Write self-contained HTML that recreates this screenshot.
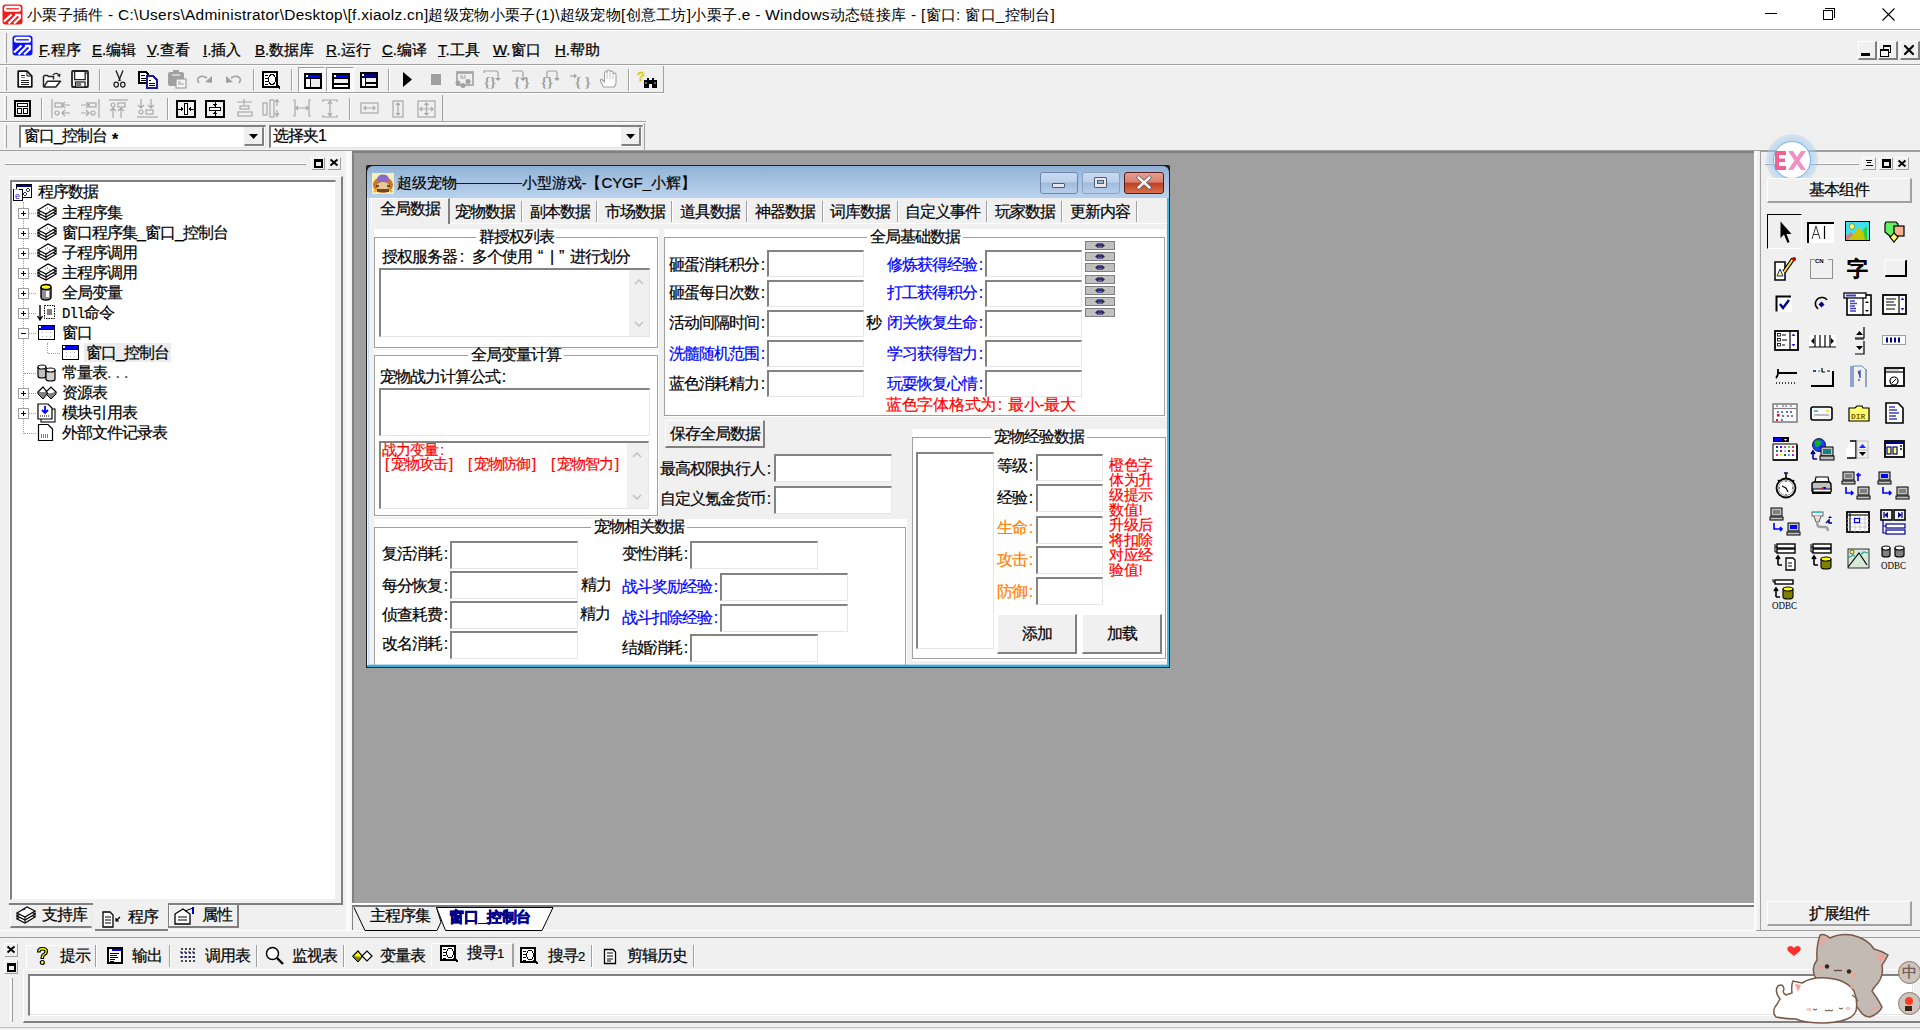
<!DOCTYPE html>
<html><head><meta charset="utf-8">
<style>
*{box-sizing:border-box;margin:0;padding:0}
html,body{width:1920px;height:1030px;overflow:hidden;background:#f0f0f0;font-family:"Liberation Sans",sans-serif;font-size:15px;color:#000}
.a{position:absolute}
.t{position:absolute;white-space:nowrap;line-height:18px;font-size:16px;letter-spacing:-1px;-webkit-text-stroke:0.2px}
.c{display:inline-block;width:8px;text-align:center;letter-spacing:0}
.sunk{border-top:2px solid #a0a0a0;border-left:2px solid #a0a0a0;border-right:1px solid #fff;border-bottom:1px solid #fff}
.edit{position:absolute;background:#fff;border-top:2px solid #838383;border-left:2px solid #838383;border-right:1px solid #e6e6e6;border-bottom:1px solid #e6e6e6}
.btn{position:absolute;background:#f0f0f0;border-top:1px solid #fff;border-left:1px solid #fff;border-right:2px solid #a0a0a0;border-bottom:2px solid #a0a0a0;text-align:center}
.hl{position:absolute;height:1px;background:#a0a0a0}
.vl{position:absolute;width:1px;background:#a0a0a0}
.grip{position:absolute;width:3px;border-left:1px solid #fff;border-right:1px solid #a0a0a0}
.tbsep{position:absolute;width:2px;border-left:1px solid #a0a0a0;border-right:1px solid #fff}
svg{position:absolute;overflow:visible}
.blue{color:#0000ff}
.red{color:#ff0000}
.org{color:#ff8000}
</style></head><body>

<!-- TITLE BAR -->
<div class="a" style="left:0;top:0;width:1920px;height:29px;background:#fff"></div>
<div class="hl" style="left:0;top:29px;width:1920px;background:#a9a9a9"></div>
<svg style="left:2px;top:4px" width="21" height="21" viewBox="0 0 21 21"><rect x="0.5" y="0.5" width="20" height="20" rx="3" fill="#f41a1a"/><rect x="2" y="1.8" width="17" height="6" rx="2.5" fill="#fff"/><rect x="4.2" y="4.2" width="12.6" height="1.3" fill="#f41a1a"/><path d="M2 17.5L9.5 10.5M6.5 19.5L14 12M12 19.5L17.8 14V11H13" stroke="#fff" stroke-width="2.3" fill="none" stroke-linejoin="round"/></svg>
<div class="t" style="left:27px;top:6px;font-size:15.45px;letter-spacing:0.29px;-webkit-text-stroke:0">小栗子插件 - C:\Users\Administrator\Desktop\[f.xiaolz.cn]超级宠物小栗子(1)\超级宠物[创意工坊]小栗子.e - Windows动态链接库 - [窗口: 窗口_控制台]</div>
<div class="hl" style="left:1765px;top:13px;width:12px;background:#000"></div>
<div class="a" style="left:1823px;top:10px;width:10px;height:10px;border:1px solid #000"></div>
<div class="a" style="left:1825px;top:8px;width:10px;height:10px;border-top:1px solid #000;border-right:1px solid #000"></div>
<svg style="left:1882px;top:8px" width="13" height="13" viewBox="0 0 13 13"><path d="M0.5 0.5L12.5 12.5M12.5 0.5L0.5 12.5" stroke="#000" stroke-width="1.1"/></svg>
<!-- MENU BAR -->
<div class="hl" style="left:0;top:30px;width:1920px;background:#fff"></div>
<div class="hl" style="left:0;top:64px;width:1920px;background:#a0a0a0"></div>
<div class="hl" style="left:0;top:65px;width:1920px;background:#fff"></div>
<div class="grip" style="left:4px;top:33px;height:30px"></div>
<svg style="left:12px;top:35px" width="21" height="21" viewBox="0 0 21 21"><rect x="0.5" y="0.5" width="20" height="20" rx="3" fill="#0a10f8"/><rect x="2" y="1.8" width="17" height="6" rx="2.5" fill="#fff"/><rect x="4.2" y="4.2" width="12.6" height="1.3" fill="#0a10f8"/><path d="M2 17.5L9.5 10.5M6.5 19.5L14 12M12 19.5L17.8 14V11H13" stroke="#fff" stroke-width="2.3" fill="none" stroke-linejoin="round"/></svg>
<div class="t" style="left:39px;top:41px;font-size:15px;letter-spacing:0;-webkit-text-stroke:0.25px;"><u>F</u>.程序</div>
<div class="t" style="left:92px;top:41px;font-size:15px;letter-spacing:0;-webkit-text-stroke:0.25px;"><u>E</u>.编辑</div>
<div class="t" style="left:147px;top:41px;font-size:15px;letter-spacing:0;-webkit-text-stroke:0.25px;"><u>V</u>.查看</div>
<div class="t" style="left:203px;top:41px;font-size:15px;letter-spacing:0;-webkit-text-stroke:0.25px;"><u>I</u>.插入</div>
<div class="t" style="left:255px;top:41px;font-size:15px;letter-spacing:0;-webkit-text-stroke:0.25px;"><u>B</u>.数据库</div>
<div class="t" style="left:326px;top:41px;font-size:15px;letter-spacing:0;-webkit-text-stroke:0.25px;"><u>R</u>.运行</div>
<div class="t" style="left:382px;top:41px;font-size:15px;letter-spacing:0;-webkit-text-stroke:0.25px;"><u>C</u>.编译</div>
<div class="t" style="left:438px;top:41px;font-size:15px;letter-spacing:0;-webkit-text-stroke:0.25px;"><u>T</u>.工具</div>
<div class="t" style="left:493px;top:41px;font-size:15px;letter-spacing:0;-webkit-text-stroke:0.25px;"><u>W</u>.窗口</div>
<div class="t" style="left:555px;top:41px;font-size:15px;letter-spacing:0;-webkit-text-stroke:0.25px;"><u>H</u>.帮助</div>
<!-- MDI child buttons -->
<div class="a" style="left:1858px;top:41px;width:19px;height:19px;border-top:1px solid #fff;border-left:1px solid #fff;border-right:2px solid #808080;border-bottom:2px solid #808080"></div>
<div class="a" style="left:1861px;top:53px;width:9px;height:3px;background:#000"></div>
<div class="a" style="left:1878px;top:41px;width:20px;height:19px;border-top:1px solid #fff;border-left:1px solid #fff;border-right:2px solid #808080;border-bottom:2px solid #808080"></div>
<div class="a" style="left:1883px;top:45px;width:8px;height:8px;border:1px solid #000;border-top-width:2px"></div>
<div class="a" style="left:1880px;top:49px;width:9px;height:8px;border:1px solid #000;border-top-width:2px;background:#fff"></div>
<div class="a" style="left:1900px;top:41px;width:20px;height:19px;border-top:1px solid #fff;border-left:1px solid #fff;border-right:2px solid #808080;border-bottom:2px solid #808080"></div>
<svg style="left:1904px;top:45px" width="10" height="10" viewBox="0 0 10 10"><path d="M1 1L9 9M9 1L1 9" stroke="#000" stroke-width="2.2" stroke-linecap="round"/></svg>
<!-- TOOLBAR 1 -->
<div class="hl" style="left:0;top:92px;width:664px;background:#a0a0a0"></div>
<div class="hl" style="left:0;top:93px;width:664px;background:#fff"></div>
<div class="vl" style="left:663px;top:66px;height:27px;background:#a0a0a0"></div>
<div class="grip" style="left:4px;top:67px;height:24px"></div>
<svg style="left:17px;top:70px" width="16" height="18" viewBox="0 0 16 18"><path d="M1.2 1.2H10L14.8 6V16.8H1.2Z" fill="#fff" stroke="#111" stroke-width="1.7" stroke-linejoin="round"/><path d="M10 1.2V6H14.8" fill="none" stroke="#111" stroke-width="1"/><path d="M4 5.5h4M4 10.5h8M4 12.5h8M4 14.5h8" stroke="#222" stroke-width="1"/><path d="M4 7.5h4" stroke="#808080"/></svg>
<svg style="left:42px;top:71px" width="20" height="17" viewBox="0 0 20 17"><path d="M1.5 16V5.5L2.5 4.5H5.5L6.5 5.5H11.5V8.5" fill="#fff" stroke="#222" stroke-width="1.5"/><path d="M1.8 16L5.5 10.2H18.5L13.8 16Z" fill="#fff" stroke="#222" stroke-width="1.5" stroke-linejoin="round"/><path d="M11 4Q14 1 16.5 3.5" fill="none" stroke="#222" stroke-width="1.2"/><path d="M15 4.2L18.6 2.6L18 6.6Z" fill="#222"/></svg>
<svg style="left:71px;top:70px" width="18" height="18" viewBox="0 0 18 18"><rect x="1" y="1" width="16" height="16" rx="1" fill="#fff" stroke="#222" stroke-width="1.8"/><path d="M3.6 1.5V9.6H14.2V1.5" fill="none" stroke="#222" stroke-width="1.3"/><rect x="4.5" y="12" width="9.5" height="5" fill="#fff" stroke="#222" stroke-width="1.3"/><rect x="5.3" y="12.7" width="5" height="3.8" fill="#777"/><path d="M15.3 2.5v1.5" stroke="#222"/></svg>
<div class="tbsep" style="left:99px;top:69px;height:22px"></div>
<svg style="left:113px;top:70px" width="13" height="18" viewBox="0 0 13 18"><path d="M3 0.5L7.3 11M10 0.5L5.7 11" stroke="#222" stroke-width="1.4"/><ellipse cx="3.2" cy="14.6" rx="2.2" ry="2.5" fill="none" stroke="#222" stroke-width="1.3"/><ellipse cx="9.8" cy="14.6" rx="2.2" ry="2.5" fill="none" stroke="#222" stroke-width="1.3"/></svg>
<svg style="left:138px;top:71px" width="20" height="17" viewBox="0 0 20 17" shape-rendering="crispEdges"><path d="M1 1H8L10 3V12H1Z" fill="#fff" stroke="#000" stroke-width="1.5"/><path d="M3 4h4M3 7h5M3 9h5" stroke="#000"/><path d="M9 5H15L19 9V17H9Z" fill="#fff" stroke="#1a1a9a" stroke-width="1.8"/><path d="M11 9h2M11 12h6M11 14h6" stroke="#000"/></svg>
<svg style="left:167px;top:70px" width="20" height="19" viewBox="0 0 20 19"><rect x="1" y="2" width="16" height="14" rx="2" fill="#a0a0a0"/><rect x="6" y="0" width="6" height="3" fill="#a0a0a0"/><path d="M5 5h8" stroke="#f0f0f0" stroke-width="1.2"/><rect x="9" y="9" width="10" height="9" fill="#f4f4f4" stroke="#a0a0a0" stroke-width="1.2"/><path d="M11 12h3M11 14h6" stroke="#a0a0a0"/></svg>
<svg style="left:196px;top:75px" width="18" height="10" viewBox="0 0 18 10"><path d="M3 8Q0 4 3.5 2Q7 0 11 3" fill="none" stroke="#a0a0a0" stroke-width="1.6"/><path d="M9 7L16 1L16 8Z" fill="#a0a0a0"/></svg>
<svg style="left:226px;top:75px" width="16" height="10" viewBox="0 0 16 10"><path d="M13 8Q16 4 12.5 2Q9 0 5 3" fill="none" stroke="#a0a0a0" stroke-width="1.6"/><path d="M7 7L0 1L0 8Z" fill="#a0a0a0"/></svg>
<div class="tbsep" style="left:253px;top:69px;height:22px"></div>
<svg style="left:262px;top:71px" width="21" height="18" viewBox="0 0 21 18" shape-rendering="crispEdges"><rect x="1" y="1" width="14" height="15" fill="#fff" stroke="#000" stroke-width="2"/><path d="M3 4h3M3 7h3M3 10h3M3 13h3" stroke="#000" stroke-width="1"/><ellipse cx="10" cy="8.5" rx="3.5" ry="5" fill="#fff" stroke="#000" stroke-width="1.2"/><path d="M14 14L18 17" stroke="#000" stroke-width="2.4"/></svg>
<div class="tbsep" style="left:291px;top:69px;height:22px"></div>
<div class="a" style="left:298px;top:67px;width:27px;height:25px;background:#f8f8f8;border-top:1px solid #a0a0a0;border-left:1px solid #a0a0a0;border-right:1px solid #fff;border-bottom:1px solid #fff"></div>
<div class="a" style="left:326px;top:67px;width:28px;height:25px;background:#f8f8f8;border-top:1px solid #a0a0a0;border-left:1px solid #a0a0a0;border-right:1px solid #fff;border-bottom:1px solid #fff"></div>
<svg style="left:304px;top:73px" width="18" height="16" viewBox="0 0 18 16" shape-rendering="crispEdges"><rect x="1" y="1" width="16" height="14" fill="#f0f0f0" stroke="#000" stroke-width="2"/><rect x="2" y="2" width="14" height="3" fill="#0000ff"/><rect x="2" y="2" width="2" height="2" fill="#fff"/><rect x="2" y="6" width="4" height="8" fill="#fff"/><path d="M6.5 5V15" stroke="#000" stroke-width="1.2"/><path d="M1 5.5H17" stroke="#000" stroke-width="1"/></svg>
<svg style="left:332px;top:73px" width="18" height="16" viewBox="0 0 18 16" shape-rendering="crispEdges"><rect x="1" y="1" width="16" height="14" fill="#f0f0f0" stroke="#000" stroke-width="2"/><rect x="2" y="2" width="14" height="3" fill="#0000ff"/><rect x="2" y="2" width="2" height="2" fill="#fff"/><rect x="2" y="11" width="14" height="3" fill="#fff"/><path d="M1 11H17" stroke="#000" stroke-width="1.2"/><path d="M1 5.5H17" stroke="#000" stroke-width="1"/></svg>
<svg style="left:360px;top:72px" width="18" height="16" viewBox="0 0 18 16" shape-rendering="crispEdges"><rect x="1" y="1" width="16" height="14" fill="#f0f0f0" stroke="#000" stroke-width="2"/><rect x="2" y="2" width="14" height="3" fill="#000080"/><rect x="2" y="2" width="2" height="2" fill="#fff"/><rect x="2" y="6" width="3" height="8" fill="#fff"/><path d="M5.5 5V15M5 11H17" stroke="#000" stroke-width="1.2"/><path d="M1 5.5H17" stroke="#000" stroke-width="1"/></svg>
<div class="tbsep" style="left:388px;top:69px;height:22px"></div>
<svg style="left:403px;top:72px" width="9" height="15" viewBox="0 0 9 15"><path d="M0 0L9 7.5L0 15Z" fill="#000"/></svg>
<div class="a" style="left:431px;top:74px;width:10px;height:11px;background:#a0a0a0"></div>
<svg style="left:455px;top:71px" width="19" height="18" viewBox="0 0 19 18"><rect x="2" y="1" width="16" height="13" fill="none" stroke="#a0a0a0" stroke-width="1.6"/><path d="M2 2H18" stroke="#a0a0a0" stroke-width="1.5"/><path d="M5 5h3M9 5h2M5 7h6" stroke="#a0a0a0"/><circle cx="3" cy="12" r="2.5" fill="#a0a0a0"/><circle cx="13" cy="10.5" r="2.5" fill="#a0a0a0"/><circle cx="8" cy="14.5" r="2.5" fill="#a0a0a0"/></svg>
<svg style="left:483px;top:70px" width="20" height="18" viewBox="0 0 20 18"><path d="M1 3V1H13Q15 1 15 3V9" fill="none" stroke="#a0a0a0" stroke-width="1.2"/><path d="M12 8H18L15 11Z" fill="#a0a0a0"/><text x="1" y="17" font-family="Liberation Serif" font-size="15" font-weight="bold" fill="#a0a0a0">{}</text></svg>
<svg style="left:512px;top:70px" width="20" height="18" viewBox="0 0 20 18"><path d="M0 1H9Q11 1 11 3V9" fill="none" stroke="#a0a0a0" stroke-width="1.2"/><path d="M8 8H14L11 11Z" fill="#a0a0a0"/><text x="2" y="17" font-family="Liberation Serif" font-size="15" font-weight="bold" fill="#a0a0a0">{ }</text></svg>
<svg style="left:541px;top:70px" width="20" height="18" viewBox="0 0 20 18"><path d="M6 8V3Q6 1 8 1H14Q16 1 16 3V9" fill="none" stroke="#a0a0a0" stroke-width="1.2"/><path d="M13 8H19L16 11Z" fill="#a0a0a0"/><text x="0" y="17" font-family="Liberation Serif" font-size="15" font-weight="bold" fill="#a0a0a0">{}</text></svg>
<svg style="left:570px;top:70px" width="20" height="18" viewBox="0 0 20 18"><path d="M0 6H5" stroke="#a0a0a0" stroke-width="1.2"/><path d="M4 3.5L7 6L4 8.5Z" fill="#a0a0a0"/><text x="5" y="17" font-family="Liberation Serif" font-size="15" font-weight="bold" fill="#a0a0a0">{ }</text></svg>
<svg style="left:600px;top:70px" width="17" height="19" viewBox="0 0 17 19"><path d="M3.5 17L0.5 11Q0 9 2 9.5L4.5 12V3Q4.5 1.5 6 1.5Q7 1.5 7 3V1.5Q7 0 8.5 0Q10 0 10 1.5V2Q10 1 11.5 1Q13 1 13 2.5V4Q13 3 14.5 3Q16 3 16 4.5V13Q16 15 14 17Z" fill="#fff" stroke="#a0a0a0" stroke-width="1.1"/><path d="M7 3V9M10 2V9M13 4V9" stroke="#c8c8c8"/></svg>
<div class="tbsep" style="left:628px;top:69px;height:22px"></div>
<svg style="left:637px;top:70px" width="22" height="19" viewBox="0 0 22 19"><text x="0" y="11" font-family="Liberation Sans" font-size="13" font-weight="bold" fill="#ffee00" stroke="#b0a000" stroke-width="0.3">?</text><path d="M7 10H10V8H12V10H15V8H17V10H20V18H15V14H12V18H7Z" fill="#000"/><path d="M9 12v2M18 12v2" stroke="#fff" stroke-width="0.8"/></svg>

<!-- TOOLBAR 2 -->
<div class="hl" style="left:0;top:121px;width:646px;background:#a0a0a0"></div>
<div class="hl" style="left:0;top:122px;width:646px;background:#fff"></div>
<div class="vl" style="left:644px;top:123px;height:27px;background:#a0a0a0"></div>
<div class="vl" style="left:442px;top:95px;height:27px;background:#a0a0a0"></div>
<div class="grip" style="left:4px;top:96px;height:24px"></div>
<svg style="left:14px;top:100px" width="17" height="17" viewBox="0 0 17 17" shape-rendering="crispEdges"><rect x="1" y="1" width="15" height="15" fill="#f0f0f0" stroke="#000" stroke-width="2"/><rect x="3.5" y="3.5" width="10" height="3" fill="#fff" stroke="#000" stroke-width="1"/><rect x="3.5" y="8.5" width="4" height="5" fill="#fff" stroke="#000" stroke-width="1"/><rect x="9.5" y="8.5" width="4" height="5" fill="#fff" stroke="#000" stroke-width="1"/></svg>
<div class="tbsep" style="left:41px;top:98px;height:22px"></div>
<svg style="left:51px;top:99px" width="20" height="19" viewBox="0 0 20 19" fill="none" stroke="#a8a8a8" stroke-width="1.2"><path d="M1 0V19"/><rect x="4" y="4" width="7" height="4"/><circle cx="6" cy="14" r="2"/><path d="M11 6H19M14 3L11 6L14 9M11 14H19M14 11L11 14L14 17"/></svg>
<svg style="left:80px;top:99px" width="20" height="19" viewBox="0 0 20 19" fill="none" stroke="#a8a8a8" stroke-width="1.2"><path d="M19 0V19"/><rect x="9" y="4" width="7" height="4"/><circle cx="13" cy="14" r="2"/><path d="M1 6H9M6 3L9 6L6 9M1 14H9M6 11L9 14L6 17"/></svg>
<svg style="left:109px;top:99px" width="19" height="19" viewBox="0 0 19 19" fill="none" stroke="#a8a8a8" stroke-width="1.2"><path d="M0 1H19"/><circle cx="4" cy="6" r="2"/><rect x="9" y="4" width="7" height="4"/><path d="M4 9V19M1 12L4 9L7 12M12 9V19M9 12L12 9L15 12"/></svg>
<svg style="left:137px;top:99px" width="21" height="19" viewBox="0 0 21 19" fill="none" stroke="#a8a8a8" stroke-width="1.2"><path d="M0 18H21"/><circle cx="4" cy="13" r="2"/><rect x="9" y="11" width="7" height="4"/><path d="M4 0V9M1 6L4 9L7 6M14 0V9M11 6L14 9L17 6"/></svg>
<div class="tbsep" style="left:167px;top:98px;height:22px"></div>
<svg style="left:176px;top:100px" width="20" height="18" viewBox="0 0 20 18" shape-rendering="crispEdges"><rect x="1" y="1" width="18" height="16" fill="none" stroke="#000" stroke-width="2"/><rect x="8.5" y="3.5" width="3" height="11" fill="#fff" stroke="#000" stroke-width="1"/><path d="M2 9H7M14 9H19" stroke="#000"/><path d="M5 7L7.5 9L5 11ZM15 7L12.5 9L15 11Z" fill="#000"/></svg>
<svg style="left:205px;top:100px" width="20" height="18" viewBox="0 0 20 18" shape-rendering="crispEdges"><rect x="1" y="1" width="18" height="16" fill="none" stroke="#000" stroke-width="2"/><rect x="4.5" y="7.5" width="11" height="3" fill="#fff" stroke="#000" stroke-width="1"/><path d="M10 2V7M10 11V16" stroke="#000"/><path d="M8 4L10 7L12 4ZM8 14L10 11L12 14Z" fill="#000"/></svg>
<svg style="left:236px;top:99px" width="17" height="19" viewBox="0 0 17 19" fill="none" stroke="#a8a8a8" stroke-width="1.2"><rect x="2" y="13" width="14" height="4"/><rect x="4" y="7" width="9" height="3"/><path d="M8 0V6M1 3H16"/></svg>
<svg style="left:262px;top:99px" width="19" height="19" viewBox="0 0 19 19" fill="none" stroke="#a8a8a8" stroke-width="1.2"><rect x="1" y="4" width="4" height="12"/><rect x="8" y="1" width="4" height="17"/><path d="M15 0V7M15 11V18M13 3L15 1L17 3M13 14L15 17L17 14"/></svg>
<svg style="left:292px;top:99px" width="20" height="19" viewBox="0 0 20 19" fill="none" stroke="#a8a8a8" stroke-width="1.2"><path d="M1 1H3V17H1M19 1H17V17H19M4 9H16M6 7L4 9L6 11M14 7L16 9L14 11"/></svg>
<svg style="left:322px;top:99px" width="16" height="19" viewBox="0 0 16 19" fill="none" stroke="#a8a8a8" stroke-width="1.2"><path d="M1 3V1H15V3M1 16V18H15V16M8 2V17M6 5L8 2L10 5M6 14L8 17L10 14"/></svg>
<div class="tbsep" style="left:349px;top:98px;height:22px"></div>
<svg style="left:360px;top:102px" width="19" height="12" viewBox="0 0 19 12" fill="none" stroke="#a8a8a8" stroke-width="1.2"><rect x="1" y="1" width="17" height="10"/><path d="M4 6H15M6 4L4 6L6 8M13 4L15 6L13 8"/></svg>
<svg style="left:392px;top:100px" width="12" height="18" viewBox="0 0 12 18" fill="none" stroke="#a8a8a8" stroke-width="1.2"><rect x="1" y="1" width="10" height="16"/><path d="M6 3V15M4 5L6 3L8 5M4 13L6 15L8 13"/></svg>
<svg style="left:417px;top:100px" width="19" height="18" viewBox="0 0 19 18" fill="none" stroke="#a8a8a8" stroke-width="1.2"><rect x="1" y="1" width="17" height="16"/><path d="M3 9H16M9.5 3V15M5 7L3 9L5 11M14 7L16 9L14 11M7.5 5L9.5 3L11.5 5M7.5 13L9.5 15L11.5 13"/></svg>

<!-- COMBO ROW -->
<div class="hl" style="left:0;top:150px;width:1920px;background:#a0a0a0"></div>
<div class="grip" style="left:4px;top:125px;height:23px"></div>
<div class="a" style="left:19px;top:125px;width:247px;height:23px;background:#fff;border-top:2px solid #808080;border-left:2px solid #808080;border-right:1px solid #e3e3e3;border-bottom:1px solid #e3e3e3"></div>
<div class="t" style="left:24px;top:127px">窗口_控制台</div>
<div class="t" style="left:112px;top:131px;font-size:16px;letter-spacing:0;font-weight:bold">*</div>
<div class="a" style="left:244px;top:127px;width:20px;height:19px;background:#f0f0f0;border-top:1px solid #f0f0f0;border-left:1px solid #f0f0f0;border-right:2px solid #808080;border-bottom:2px solid #808080"></div>
<svg style="left:249px;top:134px" width="9" height="5" viewBox="0 0 9 5"><path d="M0 0H9L4.5 5Z" fill="#000"/></svg>
<div class="a" style="left:269px;top:125px;width:374px;height:23px;background:#fff;border-top:2px solid #808080;border-left:2px solid #808080;border-right:1px solid #e3e3e3;border-bottom:1px solid #e3e3e3"></div>
<div class="t" style="left:273px;top:127px">选择夹1</div>
<div class="a" style="left:621px;top:127px;width:20px;height:19px;background:#f0f0f0;border-top:1px solid #f0f0f0;border-left:1px solid #f0f0f0;border-right:2px solid #808080;border-bottom:2px solid #808080"></div>
<svg style="left:626px;top:134px" width="9" height="5" viewBox="0 0 9 5"><path d="M0 0H9L4.5 5Z" fill="#000"/></svg>
<!-- LEFT PANEL -->
<div class="hl" style="left:5px;top:163px;width:301px;background:#fff"></div>
<div class="hl" style="left:5px;top:164px;width:301px;background:#a0a0a0"></div>
<div class="a" style="left:311px;top:157px;width:14px;height:13px;border-top:1px solid #fff;border-left:1px solid #fff;border-right:1px solid #a0a0a0;border-bottom:1px solid #a0a0a0"></div>
<div class="a" style="left:327px;top:157px;width:14px;height:13px;border-top:1px solid #fff;border-left:1px solid #fff;border-right:1px solid #a0a0a0;border-bottom:1px solid #a0a0a0"></div>
<div class="a" style="left:314px;top:159px;width:9px;height:9px;border:2px solid #000;border-top-width:3px"></div>
<svg style="left:330px;top:159px" width="8" height="7" viewBox="0 0 8 7"><path d="M0.5 0.5L7.5 6.5M7.5 0.5L0.5 6.5" stroke="#000" stroke-width="1.9"/></svg>
<div class="a" style="left:9px;top:176px;width:334px;height:727px;border-top:1px solid #fff;border-left:1px solid #fff;border-right:2px solid #808080"></div>
<div class="a" style="left:9px;top:903px;width:84px;height:2px;background:#808080"></div>
<div class="a" style="left:168px;top:903px;width:175px;height:2px;background:#808080"></div>
<div class="a" style="left:10px;top:180px;width:326px;height:720px;background:#fff;border-top:2px solid #808080;border-left:2px solid #808080;border-right:1px solid #f0f0f0;border-bottom:1px solid #f0f0f0"></div>
<div class="a" style="left:346px;top:151px;width:5px;height:780px;background:#fafafa"></div>
<svg style="left:13px;top:183px" width="20" height="19" viewBox="0 0 20 19" shape-rendering="crispEdges"><rect x="3.5" y="1.5" width="15" height="13" fill="#fff" stroke="#000"/><rect x="4" y="2" width="14" height="2" fill="#00008b"/><circle cx="15" cy="7" r="1.3" fill="none" stroke="#000" stroke-width="0.8"/><circle cx="12" cy="11" r="1.3" fill="none" stroke="#000" stroke-width="0.8"/><rect x="0.5" y="6.5" width="9" height="11" fill="#fff" stroke="#000"/><path d="M1 6.5H6" stroke="#dddd00" stroke-width="1.5"/><text x="2" y="16" font-family="Liberation Sans" font-size="9" fill="#2020c0">e</text></svg>
<div class="t" style="left:38px;top:183px">程序数据</div>
<div class="a" style="left:23px;top:202px;width:1px;height:232px;border-left:1px dotted #a0a0a0"></div>
<div class="a" style="left:47px;top:343px;width:1px;height:10px;border-left:1px dotted #a0a0a0"></div>
<div class="a" style="left:48px;top:353px;width:12px;height:1px;border-top:1px dotted #a0a0a0"></div>
<div class="a" style="left:24px;top:213px;width:12px;height:1px;border-top:1px dotted #a0a0a0"></div>
<div class="a" style="left:18px;top:208px;width:11px;height:11px;background:#fff;border:1px solid #a0a0a0"></div>
<div class="a" style="left:21px;top:213px;width:5px;height:1px;background:#000"></div>
<div class="a" style="left:23px;top:211px;width:1px;height:5px;background:#000"></div>
<svg style="left:37px;top:203px" width="20" height="19" viewBox="0 0 20 19"><path d="M1 13L11 7L19 11L9 17Z" fill="#fff" stroke="#000" stroke-width="1.1"/><path d="M1 10L11 4L19 8L9 14Z" fill="#fff" stroke="#000" stroke-width="1.1"/><path d="M1 7L11 1L19 5L9 11Z" fill="#fff" stroke="#000" stroke-width="1.1"/><path d="M1 7V13M9 11V17M19 5V11" stroke="#000" stroke-width="1"/><path d="M8 6h1M10 5h1M12 7h1" stroke="#555"/></svg>
<div class="t" style="left:62px;top:204px">主程序集</div>
<div class="a" style="left:24px;top:233px;width:12px;height:1px;border-top:1px dotted #a0a0a0"></div>
<div class="a" style="left:18px;top:228px;width:11px;height:11px;background:#fff;border:1px solid #a0a0a0"></div>
<div class="a" style="left:21px;top:233px;width:5px;height:1px;background:#000"></div>
<div class="a" style="left:23px;top:231px;width:1px;height:5px;background:#000"></div>
<svg style="left:37px;top:223px" width="20" height="19" viewBox="0 0 20 19"><path d="M1 13L11 7L19 11L9 17Z" fill="#fff" stroke="#000" stroke-width="1.1"/><path d="M1 10L11 4L19 8L9 14Z" fill="#fff" stroke="#000" stroke-width="1.1"/><path d="M1 7L11 1L19 5L9 11Z" fill="#fff" stroke="#000" stroke-width="1.1"/><path d="M1 7V13M9 11V17M19 5V11" stroke="#000" stroke-width="1"/><path d="M8 6h1M10 5h1M12 7h1" stroke="#555"/></svg>
<div class="t" style="left:62px;top:224px">窗口程序集_窗口_控制台</div>
<div class="a" style="left:24px;top:253px;width:12px;height:1px;border-top:1px dotted #a0a0a0"></div>
<div class="a" style="left:18px;top:248px;width:11px;height:11px;background:#fff;border:1px solid #a0a0a0"></div>
<div class="a" style="left:21px;top:253px;width:5px;height:1px;background:#000"></div>
<div class="a" style="left:23px;top:251px;width:1px;height:5px;background:#000"></div>
<svg style="left:37px;top:243px" width="20" height="19" viewBox="0 0 20 19"><path d="M1 13L11 7L19 11L9 17Z" fill="#fff" stroke="#000" stroke-width="1.1"/><path d="M1 10L11 4L19 8L9 14Z" fill="#fff" stroke="#000" stroke-width="1.1"/><path d="M1 7L11 1L19 5L9 11Z" fill="#fff" stroke="#000" stroke-width="1.1"/><path d="M1 7V13M9 11V17M19 5V11" stroke="#000" stroke-width="1"/><path d="M8 6h1M10 5h1M12 7h1" stroke="#555"/></svg>
<div class="t" style="left:62px;top:244px">子程序调用</div>
<div class="a" style="left:24px;top:273px;width:12px;height:1px;border-top:1px dotted #a0a0a0"></div>
<div class="a" style="left:18px;top:268px;width:11px;height:11px;background:#fff;border:1px solid #a0a0a0"></div>
<div class="a" style="left:21px;top:273px;width:5px;height:1px;background:#000"></div>
<div class="a" style="left:23px;top:271px;width:1px;height:5px;background:#000"></div>
<svg style="left:37px;top:263px" width="20" height="19" viewBox="0 0 20 19"><path d="M1 13L11 7L19 11L9 17Z" fill="#fff" stroke="#000" stroke-width="1.1"/><path d="M1 10L11 4L19 8L9 14Z" fill="#fff" stroke="#000" stroke-width="1.1"/><path d="M1 7L11 1L19 5L9 11Z" fill="#fff" stroke="#000" stroke-width="1.1"/><path d="M1 7V13M9 11V17M19 5V11" stroke="#000" stroke-width="1"/><path d="M8 6h1M10 5h1M12 7h1" stroke="#555"/></svg>
<div class="t" style="left:62px;top:264px">主程序调用</div>
<div class="a" style="left:24px;top:293px;width:12px;height:1px;border-top:1px dotted #a0a0a0"></div>
<div class="a" style="left:18px;top:288px;width:11px;height:11px;background:#fff;border:1px solid #a0a0a0"></div>
<div class="a" style="left:21px;top:293px;width:5px;height:1px;background:#000"></div>
<div class="a" style="left:23px;top:291px;width:1px;height:5px;background:#000"></div>
<svg style="left:37px;top:283px" width="20" height="19" viewBox="0 0 20 19"><path d="M4 4V14Q4 17 9 17Q14 17 14 14V4" fill="#909090" stroke="#000" stroke-width="1.4"/><ellipse cx="9" cy="4" rx="5" ry="2.5" fill="#ffff00" stroke="#000" stroke-width="1.4"/><rect x="9" y="8" width="3" height="6" fill="#fff"/></svg>
<div class="t" style="left:62px;top:284px">全局变量</div>
<div class="a" style="left:24px;top:313px;width:12px;height:1px;border-top:1px dotted #a0a0a0"></div>
<div class="a" style="left:18px;top:308px;width:11px;height:11px;background:#fff;border:1px solid #a0a0a0"></div>
<div class="a" style="left:21px;top:313px;width:5px;height:1px;background:#000"></div>
<div class="a" style="left:23px;top:311px;width:1px;height:5px;background:#000"></div>
<svg style="left:37px;top:303px" width="20" height="19" viewBox="0 0 20 19"><path d="M3 2V16M0.5 13L3 17L5.5 13" fill="none" stroke="#000" stroke-width="1.4"/><rect x="7.5" y="2.5" width="10" height="13" fill="none" stroke="#000" stroke-width="1" stroke-dasharray="1.5 1"/><path d="M10 7h5M10 9h5M10 11h5" stroke="#000"/></svg>
<div class="t" style="left:62px;top:304px"><span style="font-family:'Liberation Mono';font-size:14px;letter-spacing:-1px">Dll</span>命令</div>
<div class="a" style="left:24px;top:333px;width:12px;height:1px;border-top:1px dotted #a0a0a0"></div>
<div class="a" style="left:18px;top:328px;width:11px;height:11px;background:#fff;border:1px solid #a0a0a0"></div>
<div class="a" style="left:21px;top:333px;width:5px;height:1px;background:#000"></div>
<svg style="left:37px;top:323px" width="20" height="19" viewBox="0 0 20 19" shape-rendering="crispEdges"><rect x="1.5" y="2.5" width="16" height="14" fill="#fff" stroke="#000" stroke-width="1"/><rect x="2" y="3" width="15" height="3" fill="#0000ff"/><rect x="2" y="3" width="2" height="2" fill="#fff"/><path d="M2 6.5H17" stroke="#000"/><path d="M5 9h1M9 9h1M13 9h1M5 13h1M9 13h1M13 13h1" stroke="#b0b0b0"/></svg>
<div class="t" style="left:62px;top:324px">窗口</div>
<svg style="left:61px;top:343px" width="20" height="19" viewBox="0 0 20 19" shape-rendering="crispEdges"><rect x="1.5" y="2.5" width="16" height="14" fill="#fff" stroke="#000" stroke-width="1"/><rect x="2" y="3" width="15" height="3" fill="#0000ff"/><rect x="2" y="3" width="2" height="2" fill="#fff"/><path d="M2 6.5H17" stroke="#000"/><path d="M5 9h1M9 9h1M13 9h1M5 13h1M9 13h1M13 13h1" stroke="#b0b0b0"/></svg>
<div class="a" style="left:84px;top:343px;width:87px;height:19px;background:#ececec"></div>
<div class="t" style="left:86px;top:344px">窗口_控制台</div>
<div class="a" style="left:24px;top:373px;width:12px;height:1px;border-top:1px dotted #a0a0a0"></div>
<svg style="left:37px;top:363px" width="20" height="19" viewBox="0 0 20 19"><path d="M1 4V13Q1 15 5 15Q9 15 9 13V4" fill="#c0c0c0" stroke="#000" stroke-width="1.2"/><ellipse cx="5" cy="4" rx="4" ry="2" fill="#fff" stroke="#000" stroke-width="1.2"/><path d="M9 7V16Q9 18 13.5 18Q18 18 18 16V7" fill="#d0d0d0" stroke="#000" stroke-width="1.2"/><ellipse cx="13.5" cy="7" rx="4.5" ry="2" fill="#fff" stroke="#000" stroke-width="1.2"/></svg>
<div class="t" style="left:62px;top:364px">常量表<span style="letter-spacing:4px;color:#444">...</span></div>
<div class="a" style="left:24px;top:393px;width:12px;height:1px;border-top:1px dotted #a0a0a0"></div>
<div class="a" style="left:18px;top:388px;width:11px;height:11px;background:#fff;border:1px solid #a0a0a0"></div>
<div class="a" style="left:21px;top:393px;width:5px;height:1px;background:#000"></div>
<div class="a" style="left:23px;top:391px;width:1px;height:5px;background:#000"></div>
<svg style="left:37px;top:383px" width="20" height="19" viewBox="0 0 20 19"><path d="M1 9L6 4L10 9L6 14Z" fill="#fff" stroke="#000" stroke-width="1.2"/><path d="M9 9L14 4L19 9L14 14Z" fill="#fff" stroke="#000" stroke-width="1.2"/><path d="M1 9V11L6 16L10 11V9M9 11L14 16L19 11V9" fill="#808080" stroke="#000" stroke-width="1"/></svg>
<div class="t" style="left:62px;top:384px">资源表</div>
<div class="a" style="left:24px;top:413px;width:12px;height:1px;border-top:1px dotted #a0a0a0"></div>
<div class="a" style="left:18px;top:408px;width:11px;height:11px;background:#fff;border:1px solid #a0a0a0"></div>
<div class="a" style="left:21px;top:413px;width:5px;height:1px;background:#000"></div>
<div class="a" style="left:23px;top:411px;width:1px;height:5px;background:#000"></div>
<svg style="left:37px;top:403px" width="20" height="20" viewBox="0 0 20 20"><rect x="4" y="6" width="14" height="13" fill="#fff" stroke="#000" stroke-width="1.1"/><path d="M1 1H11L15 5V16H1Z" fill="#fff" stroke="#000" stroke-width="1.2"/><path d="M8 3V10M5 7L8 10L11 7" fill="none" stroke="#0000ff" stroke-width="1.8"/><path d="M3 13h9" stroke="#000" stroke-dasharray="1 1"/></svg>
<div class="t" style="left:62px;top:404px">模块引用表</div>
<div class="a" style="left:24px;top:433px;width:12px;height:1px;border-top:1px dotted #a0a0a0"></div>
<svg style="left:37px;top:423px" width="20" height="19" viewBox="0 0 20 19"><path d="M1.5 1.5H11L15.5 6V17.5H1.5Z" fill="#fff" stroke="#000" stroke-width="1.2"/><path d="M4 14h8M4 12h8" stroke="#000" stroke-dasharray="1 1"/></svg>
<div class="t" style="left:62px;top:424px">外部文件记录表</div>
<div class="hl" style="left:0;top:930px;width:1920px;background:#fff"></div>
<div class="a" style="left:10px;top:905px;width:82px;height:23px;border-left:1px solid #fff;border-bottom:2px solid #808080;border-right:1px solid #e8e8e8"></div>
<svg style="left:16px;top:906px" width="20" height="19" viewBox="0 0 20 19"><path d="M1 13L11 7L19 11L9 17Z" fill="#fff" stroke="#000" stroke-width="1.1"/><path d="M1 10L11 4L19 8L9 14Z" fill="#fff" stroke="#000" stroke-width="1.1"/><path d="M1 7L11 1L19 5L9 11Z" fill="#fff" stroke="#000" stroke-width="1.1"/><path d="M1 7V13M9 11V17M19 5V11" stroke="#000" stroke-width="1"/><path d="M7 4l2 -1" stroke="#0000c0" stroke-width="1.3"/></svg>
<div class="t" style="left:42px;top:906px">支持库</div>
<div class="a" style="left:95px;top:929px;width:73px;height:2px;background:#808080"></div>
<svg style="left:102px;top:911px" width="20" height="17" viewBox="0 0 20 17"><path d="M1 1H8L11 4V16H1Z" fill="#fff" stroke="#000" stroke-width="1.3"/><path d="M3 6h6M3 9h6M3 12h6" stroke="#000"/><path d="M18 6L14 10M14 7V10H17" stroke="#000" stroke-width="1.2" fill="none"/></svg>
<div class="t" style="left:128px;top:908px">程序</div>
<div class="a" style="left:168px;top:905px;width:71px;height:23px;border-left:1px solid #808080;border-right:2px solid #808080;border-bottom:2px solid #808080;box-shadow:inset 1px 1px #fff"></div>
<svg style="left:174px;top:906px" width="22" height="19" viewBox="0 0 22 19"><path d="M1 8L9 3L16 8V18H1Z" fill="#fff" stroke="#000" stroke-width="1.3"/><path d="M4 11h9M4 14h9" stroke="#000"/><path d="M11 5L19 2" stroke="#000"/><path d="M19 1V8" stroke="#0000c0" stroke-width="2"/></svg>
<div class="t" style="left:202px;top:906px">属性</div>
<!-- MDI -->
<div class="a" style="left:352px;top:151px;width:1402px;height:752px;background:#a0a0a0;border-top:2px solid #808080;border-left:2px solid #808080"></div>
<div class="a" style="left:352px;top:903px;width:1402px;height:2px;background:#fff"></div>
<div class="a" style="left:352px;top:905px;width:1402px;height:2px;background:#7a7a7a"></div>
<div class="vl" style="left:352px;top:906px;height:24px;background:#808080"></div>
<svg style="left:352px;top:906px" width="210" height="26" viewBox="0 0 210 26">
<path d="M2 1.5L13 24.5H85L89 16L84.5 1.5" fill="#f0f0f0" stroke="#000" stroke-width="1"/>
<path d="M84.5 1.5L93.5 24.5H190L201 1.5Z" fill="#fff" stroke="#000" stroke-width="1"/>

</svg>
<div class="t" style="left:370px;top:907px">主程序集</div>
<div class="t" style="left:449px;top:908px;color:#00008b;font-weight:bold;font-size:15px;letter-spacing:-0.2px;-webkit-text-stroke:0.6px">窗口_控制台</div>
<!-- RIGHT PANEL -->
<div class="a" style="left:1754px;top:151px;width:3px;height:779px;background:#fafafa"></div>
<div class="vl" style="left:1760px;top:152px;height:778px;background:#a0a0a0"></div>
<div class="hl" style="left:1760px;top:151px;width:160px;background:#a0a0a0"></div>
<div class="hl" style="left:1756px;top:930px;width:164px;background:#a0a0a0"></div>
<div class="hl" style="left:1765px;top:163px;width:94px;background:#fff"></div>
<div class="hl" style="left:1765px;top:164px;width:94px;background:#a0a0a0"></div>
<div class="a" style="left:1862px;top:157px;width:14px;height:13px;border-top:1px solid #fff;border-left:1px solid #fff;border-right:1px solid #a0a0a0;border-bottom:1px solid #a0a0a0"></div>
<div class="a" style="left:1879px;top:157px;width:14px;height:13px;border-top:1px solid #fff;border-left:1px solid #fff;border-right:1px solid #a0a0a0;border-bottom:1px solid #a0a0a0"></div>
<div class="a" style="left:1895px;top:157px;width:14px;height:13px;border-top:1px solid #fff;border-left:1px solid #fff;border-right:1px solid #a0a0a0;border-bottom:1px solid #a0a0a0"></div>
<div class="a" style="left:1866px;top:160px;width:6px;height:1px;background:#000"></div>
<div class="a" style="left:1867px;top:162px;width:4px;height:1px;background:#000"></div>
<div class="a" style="left:1866px;top:165px;width:7px;height:1px;background:#000"></div>
<div class="a" style="left:1882px;top:159px;width:9px;height:9px;border:2px solid #000;border-top-width:3px"></div>
<svg style="left:1898px;top:160px" width="8" height="7" viewBox="0 0 8 7"><path d="M0.5 0.5L7.5 6.5M7.5 0.5L0.5 6.5" stroke="#000" stroke-width="1.9"/></svg>
<!-- EX logo -->
<div class="a" style="left:1766px;top:134px;width:52px;height:52px;border-radius:50%;background:radial-gradient(circle,rgba(160,200,235,0.55) 55%,rgba(170,205,235,0.25) 75%,rgba(240,240,240,0) 100%)"></div>
<div class="a" style="left:1773px;top:141px;width:38px;height:38px;border-radius:50%;background:#fff;border:1.5px solid #6ab4f0"></div>
<svg style="left:1774px;top:150px" width="37" height="21" viewBox="0 0 37 21"><path d="M1 1H12V5H5V8.5H11V12H5V16H12V20H1Z" fill="#f06292"/><path d="M14 1H19L23 7L27 1H32L25.5 10.5L32 20H27L23 14L19 20H14L20.5 10.5Z" fill="#f48fc4"/></svg>
<div class="btn" style="left:1767px;top:178px;width:145px;height:25px;border-right:2px solid #a0a0a0;border-bottom:2px solid #a0a0a0"></div>
<div class="t" style="left:1809px;top:181px">基本组件</div>
<div class="btn" style="left:1767px;top:901px;width:145px;height:25px"></div>
<div class="t" style="left:1809px;top:905px">扩展组件</div>
<!-- RIGHT ICONS -->
<div class="a" style="left:1767px;top:214px;width:35px;height:35px;border-top:1px solid #000;border-left:1px solid #000;border-right:1px solid #fff;border-bottom:1px solid #fff;background:#efefef"></div>
<svg style="left:1780px;top:221px" width="12" height="24" viewBox="0 0 12 24"><path d="M0.5 0.5V17L4 13.5L7.5 22L9.5 21L6.5 13H11.5Z" fill="#000"/></svg>
<svg style="left:1807px;top:222px" width="28" height="21" viewBox="0 0 28 21"><path d="M0 0H27V2H2V21H0Z" fill="#000"/><rect x="2" y="2" width="25" height="19" fill="#fff"/><path d="M5 17L9 4L13 17M6.5 12.5H11.5" fill="none" stroke="#333" stroke-width="1"/><path d="M17.5 4V17" stroke="#000" stroke-width="1.2"/></svg>
<svg style="left:1845px;top:221px" width="25" height="20" viewBox="0 0 25 20"><rect x="0.5" y="0.5" width="24" height="19" fill="#40e0f0" stroke="#000"/><circle cx="7" cy="5.5" r="2.8" fill="#ffff60" stroke="#555" stroke-width="0.6"/><path d="M4 19L14 6L23 19Z" fill="#c8c800"/><path d="M18 9L22 5V19H20Z" fill="#30d030"/><path d="M1 15L6 11L8 14L3 19H1Z" fill="#d08080"/></svg>
<svg style="left:1884px;top:221px" width="21" height="23" viewBox="0 0 21 23"><path d="M2 1H12L14 3V13L8 17L1 11V3Z" fill="#60f060" stroke="#000" stroke-width="1.2"/><rect x="10" y="5" width="10" height="10" fill="#f8b090" stroke="#000" stroke-width="1.2"/><path d="M10 12L14 16L10 21L6 16Z" fill="#ffff60" stroke="#000" stroke-width="1.2"/></svg>
<svg style="left:1774px;top:256px" width="23" height="25" viewBox="0 0 23 25"><path d="M1 6H11V24H1Z" fill="#fff" stroke="#000" stroke-width="1.5"/><path d="M3 20L6 13L9 20Z" fill="#ffff60" stroke="#2020a0" stroke-width="1"/><path d="M10 16L19 3" stroke="#000" stroke-width="4"/><path d="M10 16L19 3" stroke="#ffe040" stroke-width="2"/><circle cx="20" cy="3" r="2" fill="#c00000"/></svg>
<svg style="left:1810px;top:257px" width="23" height="22" viewBox="0 0 23 22"><rect x="0.5" y="2.5" width="22" height="19" fill="none" stroke="#909090"/><rect x="5" y="0" width="13" height="5" fill="#f0f0f0"/><text x="5" y="5.5" font-family="Liberation Sans" font-size="6" font-weight="bold" fill="#000">CN</text></svg>
<div class="t" style="left:1847px;top:258px;font-size:21px;line-height:22px;font-weight:bold">字</div>
<svg style="left:1884px;top:259px" width="23" height="18" viewBox="0 0 23 18"><path d="M22 1V17H1" fill="none" stroke="#000" stroke-width="2"/><path d="M1 17V1H22" fill="none" stroke="#fff" stroke-width="1"/></svg>
<svg style="left:1776px;top:296px" width="16" height="16" viewBox="0 0 16 16"><rect x="0" y="0" width="16" height="16" fill="#fff"/><path d="M0.5 15.5V0.5H15" stroke="#000" stroke-width="2" fill="none"/><path d="M4 8L7 12L13 4" stroke="#00008b" stroke-width="2.4" fill="none"/></svg>
<svg style="left:1814px;top:296px" width="15" height="16" viewBox="0 0 15 16"><path d="M4 13Q0 9 2 5Q4 1 9 1.5Q12 2 13 4" fill="none" stroke="#000" stroke-width="1.6"/><path d="M7.5 5.5L10.5 8.5L7.5 11.5L4.5 8.5Z" fill="#00008b"/></svg>
<svg style="left:1844px;top:293px" width="28" height="23" viewBox="0 0 28 23"><rect x="3" y="2" width="24" height="20" fill="#fff" stroke="#000" stroke-width="1.6"/><rect x="0" y="0" width="22" height="5" fill="#fff" stroke="#000" stroke-width="1.3"/><path d="M2 2.5h10" stroke="#4040b0" stroke-width="2"/><path d="M6 8h5M6 10.5h7M6 13h5M6 15.5h6M6 18h6" stroke="#4040c0" stroke-width="1.5"/><path d="M19 5V22" stroke="#000" stroke-width="1.2"/><path d="M21 10L23 8L25 10ZM21 17L23 19L25 17Z" fill="#000"/></svg>
<svg style="left:1882px;top:294px" width="25" height="21" viewBox="0 0 25 21"><rect x="1" y="1" width="23" height="19" fill="#fff" stroke="#000" stroke-width="1.8"/><path d="M4 5h10M4 8h8M4 11h10M4 15h9" stroke="#000" stroke-width="1.2"/><path d="M17 1V20" stroke="#000" stroke-width="1.2"/><path d="M18.5 6L20.5 3.5L22.5 6ZM18.5 14L20.5 16.5L22.5 14Z" fill="#2020e0"/></svg>
<svg style="left:1774px;top:330px" width="25" height="21" viewBox="0 0 25 21"><rect x="1" y="1" width="23" height="19" fill="#fff" stroke="#000" stroke-width="1.8"/><rect x="3.5" y="3.5" width="3" height="2.5" fill="none" stroke="#000" stroke-width="0.8"/><rect x="3.5" y="8.5" width="3" height="2.5" fill="none" stroke="#000" stroke-width="0.8"/><rect x="3.5" y="13.5" width="3" height="2.5" fill="none" stroke="#000" stroke-width="0.8"/><path d="M8 5h4M8 10h5M8 15h3" stroke="#000" stroke-width="1.2"/><path d="M16 1V20" stroke="#000" stroke-width="1.2"/><path d="M17.5 6L19.5 3.5L21.5 6ZM17.5 14L19.5 16.5L21.5 14Z" fill="#2020e0"/></svg>
<svg style="left:1809px;top:335px" width="27" height="13" viewBox="0 0 27 13"><rect x="0" y="0" width="27" height="13" fill="#fff"/><path d="M0 12H27M6 0V12M11 0V12M16 0V12M21 0V12" stroke="#000" stroke-width="1.2"/><path d="M2 6L5 3V9ZM25 6L22 3V9Z" fill="#000"/></svg>
<svg style="left:1854px;top:327px" width="11" height="28" viewBox="0 0 11 28"><path d="M10 0V11H1M10 14V27H1" stroke="#000" stroke-width="1.2" fill="none"/><path d="M2 8L5.5 4L9 8ZM2 19L5.5 23L9 19Z" fill="#000"/><path d="M1 12H10" stroke="#000"/></svg>
<svg style="left:1882px;top:335px" width="24" height="10" viewBox="0 0 24 10"><rect x="0.5" y="0.5" width="23" height="9" fill="#fafafa" stroke="#a0a0a0"/><path d="M4 5h2M8 5h2M12 5h2M16 5h2" stroke="#00008b" stroke-width="5"/></svg>
<svg style="left:1775px;top:369px" width="23" height="16" viewBox="0 0 23 16"><path d="M1 9Q3 7 3 4V0M3 4H22" stroke="#000" stroke-width="1.8" fill="none"/><path d="M1 14h1M4 14h1M7 14h1M10 14h1M13 14h1M16 14h1M19 14h1" stroke="#000" stroke-width="1.6"/></svg>
<svg style="left:1810px;top:368px" width="24" height="19" viewBox="0 0 24 19"><path d="M1 18H23V3" stroke="#000" stroke-width="2" fill="none"/><path d="M1 2H22" stroke="#fff" stroke-width="1"/><path d="M3 3h3" stroke="#00008b" stroke-width="1.5"/><path d="M8 3h2" stroke="#30b0b0" stroke-width="1.5"/><path d="M12 0V4M12 4H15M17 3h3" stroke="#000" stroke-width="1.2"/></svg>
<svg style="left:1850px;top:366px" width="17" height="21" viewBox="0 0 17 21"><path d="M1 0V21M16 3V21M3 0V21" stroke="#5070b0" stroke-width="1.2"/><path d="M3 0H12L16 4" fill="none" stroke="#7090c0"/><path d="M8 6L10 5V12M8 14h2" stroke="#4060c0" stroke-width="1.5"/></svg>
<svg style="left:1884px;top:367px" width="21" height="20" viewBox="0 0 21 20"><rect x="1" y="1" width="19" height="18" fill="#fff" stroke="#000" stroke-width="1.8"/><path d="M1 5H20" stroke="#000" stroke-width="1.2"/><path d="M2 3H15" stroke="#c0c0c0" stroke-width="1.5"/><circle cx="10" cy="14" r="4" fill="#fff" stroke="#000" stroke-width="1.2"/><path d="M8 16L12 12" stroke="#000"/></svg>
<svg style="left:1772px;top:403px" width="26" height="20" viewBox="0 0 26 20"><rect x="1" y="1" width="24" height="18" fill="#fff" stroke="#808080" stroke-width="1.6"/><path d="M1 5.5H25" stroke="#808080" stroke-width="1.2"/><path d="M4 3h2M10 3h2M13 3h2M18 3h2" stroke="#4040c0"/><path d="M5 9h2M9 9h2M14 9h2M18 9h2" stroke="#4040c0" stroke-width="1.4"/><rect x="5" y="11" width="2.5" height="2.5" fill="#ff0000"/><path d="M10 13h2M15 13h2M19 13h2M4 17h2M9 17h2" stroke="#4040c0" stroke-width="1.4"/><path d="M4 17h2" stroke="#ff0000" stroke-width="1.4"/></svg>
<svg style="left:1810px;top:406px" width="23" height="15" viewBox="0 0 23 15"><rect x="1" y="1" width="21" height="13" rx="2" fill="#f8f8f8" stroke="#000" stroke-width="1.6"/><path d="M4 5h4" stroke="#30a0a0" stroke-width="1.4"/><path d="M16 5h3" stroke="#e0e000" stroke-width="1.4"/><path d="M4 9h15" stroke="#808080"/></svg>
<svg style="left:1848px;top:404px" width="22" height="18" viewBox="0 0 22 18"><path d="M1 4H7L9 2H14L15 4H21V17H1Z" fill="#ffff70" stroke="#000" stroke-width="1.2"/><text x="3" y="14.5" font-family="Liberation Mono" font-size="8" font-weight="bold" fill="#806000">DIR</text></svg>
<svg style="left:1885px;top:402px" width="19" height="22" viewBox="0 0 19 22"><path d="M1 1H13L18 6V21H1Z" fill="#fff" stroke="#000" stroke-width="1.6"/><path d="M4 5h6M4 8h8M4 11h10M4 14h7M4 17h8" stroke="#4040c0" stroke-width="1.4"/></svg>
<svg style="left:1772px;top:437px" width="26" height="24" viewBox="0 0 26 24"><rect x="1" y="7" width="24" height="16" fill="#fff" stroke="#000" stroke-width="1" /><path d="M1 23H25V8" stroke="#000" stroke-width="1.5" fill="none"/><rect x="1" y="0" width="16" height="5" fill="#000"/><rect x="2" y="1" width="8" height="3" fill="#0000ff"/><path d="M12 2L13.5 4L15 2Z" fill="#fff"/><g><rect x="4" y="9" width="2" height="2" fill="#202080"/><rect x="8" y="9" width="2" height="2" fill="#2020ff"/><rect x="12" y="9" width="2" height="2" fill="#ff20ff"/><rect x="16" y="9" width="2" height="2" fill="#20ff20"/><rect x="20" y="9" width="2" height="2" fill="#ff2020"/><rect x="4" y="13" width="2" height="2" fill="#208080"/><rect x="8" y="13" width="2" height="2" fill="#802080"/><rect x="12" y="13" width="2" height="2" fill="#a0c0ff"/><rect x="16" y="13" width="2" height="2" fill="#802020"/><rect x="20" y="13" width="2" height="2" fill="#ff4040"/><rect x="4" y="17" width="2" height="2" fill="#ff20a0"/><rect x="8" y="17" width="2" height="2" fill="#ffff00"/><rect x="12" y="17" width="2" height="2" fill="#206020"/><rect x="16" y="17" width="2" height="2" fill="#20c0ff"/><rect x="20" y="17" width="2" height="2" fill="#a020ff"/></g></svg>
<svg style="left:1810px;top:438px" width="25" height="23" viewBox="0 0 25 23"><circle cx="9" cy="7" r="6.5" fill="#2040ff" stroke="#000" stroke-width="0.8"/><path d="M5 3Q9 1 12 4Q10 8 7 9Q4 8 5 3Z" fill="#00c000"/><rect x="11" y="9" width="12" height="9" fill="#c0c0c0" stroke="#000"/><rect x="13" y="11" width="8" height="5" fill="#108080"/><rect x="10" y="18" width="14" height="4" fill="#c0c0c0" stroke="#000"/><path d="M3 21V14M1 16L3 13L5 16M3 21H7" stroke="#00008b" stroke-width="1.6" fill="none"/></svg>
<svg style="left:1846px;top:440px" width="23" height="19" viewBox="0 0 23 19"><path d="M0 9L5 1H10V18H0Z" fill="#fff"/><path d="M4 1H10V18H1" stroke="#000" stroke-width="1.4" fill="none"/><rect x="11" y="1" width="11" height="17" fill="#f0f0f0" stroke="#c0c0c0"/><path d="M13 8L16.5 4L20 8Z" fill="#2020ff"/><path d="M13 12L16.5 16L20 12Z" fill="#000"/><path d="M11 10H22" stroke="#c0c0c0"/></svg>
<svg style="left:1884px;top:440px" width="21" height="18" viewBox="0 0 21 18"><rect x="1" y="1" width="19" height="16" fill="#fff" stroke="#000" stroke-width="1.8"/><rect x="1" y="1" width="19" height="3" fill="#00008b"/><rect x="3" y="7" width="4" height="7" fill="#ffff60" stroke="#00008b" stroke-width="1.2"/><rect x="9" y="7" width="4" height="7" fill="#ffff60" stroke="#00008b" stroke-width="1.2"/><path d="M16 6h2M16 9h2" stroke="#000" stroke-width="1.5"/></svg>
<svg style="left:1775px;top:472px" width="22" height="27" viewBox="0 0 22 27"><circle cx="11" cy="16" r="9.5" fill="#fff" stroke="#000" stroke-width="1.8"/><circle cx="11" cy="16" r="7.5" fill="none" stroke="#808080" stroke-width="0.8"/><path d="M9 1H13M11 1V6M3 8L5 10M19 8L17 10" stroke="#000" stroke-width="1.6"/><path d="M9 1h4" stroke="#4040c0" stroke-width="1"/><path d="M11 16L7 14M11 16L13 20" stroke="#000" stroke-width="1.2"/><path d="M11 9v1M11 22v1M4 16h1M17 16h1" stroke="#000"/></svg>
<svg style="left:1811px;top:476px" width="21" height="19" viewBox="0 0 21 19"><path d="M5 1H17L18 6H4Z" fill="#fff" stroke="#000" stroke-width="1.2"/><path d="M1 8Q1 6 4 6H17Q20 6 20 9V15H1Z" fill="#c0c0c0" stroke="#000" stroke-width="1.4"/><rect x="2" y="13" width="18" height="3" fill="#fff" stroke="#000"/><path d="M11 12h2" stroke="#ff0000" stroke-width="2"/><path d="M13 12h2" stroke="#0000ff" stroke-width="2"/><path d="M1 17H20" stroke="#000" stroke-width="2"/></svg>
<svg style="left:1842px;top:471px" width="28" height="28" viewBox="0 0 28 28"><rect x="1" y="1" width="11" height="8" fill="#c0c0c0" stroke="#000"/><rect x="3" y="3" width="7" height="4" fill="#808080"/><rect x="0" y="10" width="13" height="3" fill="#c0c0c0" stroke="#000"/><rect x="16" y="16" width="11" height="8" fill="#c0c0c0" stroke="#000"/><rect x="18" y="18" width="7" height="4" fill="#808080"/><rect x="15" y="25" width="13" height="3" fill="#c0c0c0" stroke="#000"/><path d="M16 10V4H19M17 2L15 4L17 6" fill="none" stroke="#0000ff" stroke-width="1.6"/><path d="M4 16V22H11M9 20L11 22L9 24" fill="none" stroke="#0000ff" stroke-width="1.6"/></svg>
<svg style="left:1878px;top:471px" width="31" height="28" viewBox="0 0 31 28"><rect x="1" y="1" width="11" height="8" fill="#c0c0c0" stroke="#000"/><rect x="3" y="3" width="7" height="4" fill="#0000ff"/><rect x="0" y="10" width="13" height="3" fill="#c0c0c0" stroke="#000"/><rect x="19" y="16" width="11" height="8" fill="#c0c0c0" stroke="#000"/><rect x="21" y="18" width="7" height="4" fill="#808080"/><rect x="18" y="25" width="13" height="3" fill="#c0c0c0" stroke="#000"/><path d="M5 16V22H13M11 20L13 22L11 24" fill="none" stroke="#0000ff" stroke-width="1.6"/></svg>
<svg style="left:1770px;top:507px" width="31" height="29" viewBox="0 0 31 29"><rect x="1" y="1" width="11" height="8" fill="#c0c0c0" stroke="#000"/><rect x="3" y="3" width="7" height="4" fill="#808080"/><rect x="0" y="10" width="13" height="3" fill="#c0c0c0" stroke="#000"/><rect x="18" y="16" width="11" height="8" fill="#c0c0c0" stroke="#000"/><rect x="20" y="18" width="7" height="4" fill="#0000ff"/><rect x="17" y="25" width="13" height="3" fill="#c0c0c0" stroke="#000"/><path d="M4 16V22H12M10 20L12 22L10 24" fill="none" stroke="#0000ff" stroke-width="1.6"/></svg>
<svg style="left:1811px;top:511px" width="23" height="21" viewBox="0 0 23 21"><rect x="1" y="1" width="11" height="4" fill="#fff" stroke="#606060"/><path d="M2 1.5h9" stroke="#40c0c0" stroke-width="1.2"/><path d="M3 5L5 11H8L10 5" fill="#e0e0e0" stroke="#606060"/><path d="M6.5 11Q5 16 10 16H14Q17 16 17 20" fill="none" stroke="#a0a0a0" stroke-width="2.4"/><path d="M15 12L18 9V12H21" stroke="#00008b" stroke-width="1.5" fill="none"/><path d="M17 7L19 5L21 7Z" fill="#00008b"/></svg>
<svg style="left:1846px;top:511px" width="24" height="22" viewBox="0 0 24 22"><rect x="1" y="1" width="22" height="20" fill="#fff" stroke="#000" stroke-width="1.8"/><path d="M1 4H23M4 1V21M1 8h22M1 12h22M1 16h22M9 4v17M14 4v17M19 4v17" stroke="#c0c0c0" stroke-width="0.8"/><path d="M1 4H23M4 1V21" stroke="#000" stroke-width="1"/><rect x="8.5" y="7.5" width="5" height="4" fill="#fff" stroke="#0000ff" stroke-width="1.2"/></svg>
<svg style="left:1880px;top:509px" width="27" height="27" viewBox="0 0 27 27"><rect x="1" y="1" width="11" height="10" fill="#f0f0f0" stroke="#000" stroke-width="1.6"/><rect x="14" y="1" width="11" height="10" fill="#f0f0f0" stroke="#000" stroke-width="1.6"/><path d="M4 6L8 3V9ZM22 6L18 3V9Z" fill="#00008b"/><path d="M4 3v6M22 3v6" stroke="#00008b" stroke-width="1.2"/><path d="M3 11V24H6M3 17H6" stroke="#00008b" stroke-width="1.2" fill="none"/><rect x="6" y="15" width="19" height="4" fill="#fff" stroke="#00008b" stroke-width="1.2"/><rect x="6" y="21" width="19" height="4" fill="#fff" stroke="#00008b" stroke-width="1.2"/></svg>
<svg style="left:1774px;top:543px" width="23" height="28" viewBox="0 0 23 28"><path d="M1 1V9H3M1 4H3" stroke="#000" fill="none"/><rect x="3" y="1" width="18" height="4" fill="#fff" stroke="#000" stroke-width="1.4"/><rect x="3" y="6" width="18" height="4" fill="#fff" stroke="#000" stroke-width="1.4"/><path d="M4 22V14M2 16L4 13L6 16M4 22H8" stroke="#000" stroke-width="1.6" fill="none"/><path d="M12 15H19L21 17V27H12Z" fill="#fff" stroke="#000" stroke-width="1.3"/><path d="M14 20h4M14 23h4" stroke="#000"/></svg>
<svg style="left:1810px;top:543px" width="24" height="28" viewBox="0 0 24 28"><path d="M1 1V9H3M1 4H3" stroke="#000" fill="none"/><rect x="3" y="1" width="18" height="4" fill="#fff" stroke="#000" stroke-width="1.4"/><rect x="3" y="6" width="18" height="4" fill="#fff" stroke="#000" stroke-width="1.4"/><path d="M4 22V14M2 16L4 13L6 16M4 22H8" stroke="#000" stroke-width="1.6" fill="none"/><path d="M11 16V24Q11 26 16 26Q21 26 21 24V16" fill="#808000" stroke="#000" stroke-width="1.1"/><ellipse cx="16" cy="16" rx="5" ry="2" fill="#ffff00" stroke="#000" stroke-width="1.1"/></svg>
<svg style="left:1847px;top:548px" width="23" height="21" viewBox="0 0 23 21"><rect x="1" y="1" width="21" height="19" fill="#d8e8d8" stroke="#000" stroke-width="0.8"/><path d="M1 19L12 5L20 17" fill="none" stroke="#000" stroke-width="1.2"/><path d="M1 10L6 7L9 9M13 7L17 4L21 5" stroke="#30a0a0" stroke-width="1.2" fill="none"/><circle cx="5" cy="4" r="2" fill="#ffff60" stroke="#000" stroke-width="0.6"/></svg>
<svg style="left:1881px;top:545px" width="26" height="26" viewBox="0 0 26 26"><path d="M1 3V10Q1 12 5 12Q9 12 9 10V3" fill="#808080" stroke="#000" stroke-width="1.2"/><ellipse cx="5" cy="3" rx="4" ry="2" fill="#fff" stroke="#000" stroke-width="1.2"/><path d="M14 3V10Q14 12 18.5 12Q23 12 23 10V3" fill="#808080" stroke="#000" stroke-width="1.2"/><ellipse cx="18.5" cy="3" rx="4.5" ry="2" fill="#fff" stroke="#000" stroke-width="1.2"/><text x="0" y="24" font-family="Liberation Serif" font-size="11" fill="#000" textLength="25" lengthAdjust="spacingAndGlyphs">ODBC</text></svg>
<svg style="left:1772px;top:578px" width="26" height="32" viewBox="0 0 26 32"><path d="M1 1V4H3" stroke="#000" fill="none"/><rect x="3" y="2" width="18" height="4" fill="#fff" stroke="#000" stroke-width="1.4"/><path d="M4 19V11M2 13L4 10L6 13M4 19H8" stroke="#000" stroke-width="1.6" fill="none"/><path d="M11 11V19Q11 21 16 21Q21 21 21 19V11" fill="#808000" stroke="#000" stroke-width="1.1"/><ellipse cx="16" cy="11" rx="5" ry="2" fill="#ffff00" stroke="#000" stroke-width="1.1"/><text x="0" y="31" font-family="Liberation Serif" font-size="11" fill="#000" textLength="25" lengthAdjust="spacingAndGlyphs">ODBC</text></svg>
<!-- BOTTOM PANEL -->
<div class="hl" style="left:0;top:937px;width:1920px;background:#a0a0a0"></div>
<div class="a" style="left:4px;top:943px;width:14px;height:14px;border-top:1px solid #fff;border-left:1px solid #fff;border-right:1px solid #a0a0a0;border-bottom:1px solid #a0a0a0"></div>
<svg style="left:7px;top:946px" width="8" height="7" viewBox="0 0 8 7"><path d="M0.5 0.5L7.5 6.5M7.5 0.5L0.5 6.5" stroke="#000" stroke-width="1.9"/></svg>
<div class="a" style="left:4px;top:960px;width:14px;height:14px;border-top:1px solid #fff;border-left:1px solid #fff;border-right:1px solid #a0a0a0;border-bottom:1px solid #a0a0a0"></div>
<div class="a" style="left:7px;top:963px;width:9px;height:9px;border:2px solid #000;border-top-width:3px"></div>
<div class="a" style="left:10px;top:978px;width:3px;height:44px;border-left:1px solid #fff;border-right:1px solid #a0a0a0"></div>
<!-- tabs -->
<div class="a" style="left:26px;top:945px;width:70px;height:22px;border-left:1px solid #fff;border-top:1px solid #fff"></div>
<div class="tbsep" style="left:95px;top:945px;height:22px"></div>
<div class="tbsep" style="left:169px;top:945px;height:22px"></div>
<div class="tbsep" style="left:256px;top:945px;height:22px"></div>
<div class="tbsep" style="left:343px;top:945px;height:22px"></div>
<div class="a" style="left:431px;top:943px;width:83px;height:24px;border-left:1px solid #fff;border-top:1px solid #fff;border-right:2px solid #a0a0a0"></div>
<div class="tbsep" style="left:591px;top:945px;height:22px"></div>
<div class="tbsep" style="left:693px;top:945px;height:22px"></div>
<svg style="left:35px;top:946px" width="15" height="20" viewBox="0 0 15 20"><path d="M2.5 6Q2.5 1.5 7.5 1.5Q12.5 1.5 12.5 5.5Q12.5 8 9.5 9.5Q8.5 10 8.5 12.5H6Q6 9 8 7.8Q10 6.8 10 5.5Q10 4 7.5 4Q5 4 5 6Z" fill="#ffff00" stroke="#000" stroke-width="1.2"/><circle cx="7.3" cy="16.5" r="2" fill="#ffff00" stroke="#000" stroke-width="1.2"/></svg>
<div class="t" style="left:60px;top:947px">提示</div>
<svg style="left:107px;top:947px" width="16" height="17" viewBox="0 0 16 17" shape-rendering="crispEdges"><rect x="1" y="1" width="14" height="15" fill="#fff" stroke="#000" stroke-width="1.6"/><rect x="5" y="2" width="9" height="2" fill="#0000ff"/><path d="M3 6h9M3 8h7M3 10h8M3 12h5M3 14h4" stroke="#000"/></svg>
<div class="t" style="left:132px;top:947px">输出</div>
<svg style="left:180px;top:947px" width="15" height="16" viewBox="0 0 15 16"><path d="M2 1V15M6 1V15M10 1V15M14 1V15" stroke="#000" stroke-width="1.4" stroke-dasharray="2 2"/><path d="M0 5H15M0 10H15" stroke="#00008b" stroke-width="1.2" stroke-dasharray="2 2"/></svg>
<div class="t" style="left:205px;top:947px">调用表</div>
<svg style="left:265px;top:946px" width="19" height="19" viewBox="0 0 19 19"><circle cx="7.5" cy="7.5" r="6" fill="#fff" stroke="#000" stroke-width="1.5"/><path d="M12 12L18 18" stroke="#000" stroke-width="2.4"/></svg>
<div class="t" style="left:292px;top:947px">监视表</div>
<svg style="left:352px;top:949px" width="21" height="14" viewBox="0 0 21 14"><path d="M1 7L6 2L10 7L6 12Z" fill="#ffff00" stroke="#000" stroke-width="1.2"/><path d="M10 7L15 2L20 7L15 12Z" fill="#fff" stroke="#000" stroke-width="1.2"/><path d="M1 7V8L6 13L10 8" fill="#808000" stroke="#000"/></svg>
<div class="t" style="left:380px;top:947px">变量表</div>
<svg style="left:440px;top:945px" width="21" height="18" viewBox="0 0 21 18" shape-rendering="crispEdges"><rect x="1" y="1" width="14" height="14" fill="#fff" stroke="#000" stroke-width="1.8"/><path d="M3 4h3M3 7h3M3 10h3M3 13h3" stroke="#000" stroke-width="1"/><ellipse cx="10" cy="8" rx="3.5" ry="4.5" fill="#fff" stroke="#000" stroke-width="1.1"/><path d="M14 13L18 17" stroke="#000" stroke-width="2.4"/></svg>
<div class="t" style="left:467px;top:944px">搜寻<span style="font-size:13px">1</span></div>
<svg style="left:520px;top:947px" width="21" height="18" viewBox="0 0 21 18" shape-rendering="crispEdges"><rect x="1" y="1" width="14" height="14" fill="#fff" stroke="#000" stroke-width="1.8"/><path d="M3 4h3M3 7h3M3 10h3M3 13h3" stroke="#000" stroke-width="1"/><ellipse cx="10" cy="8" rx="3.5" ry="4.5" fill="#fff" stroke="#000" stroke-width="1.1"/><path d="M14 13L18 17" stroke="#000" stroke-width="2.4"/></svg>
<div class="t" style="left:548px;top:947px">搜寻<span style="font-size:13px">2</span></div>
<svg style="left:603px;top:948px" width="14" height="17" viewBox="0 0 14 17"><path d="M1.5 1.5H10L12.5 4V15.5H1.5Z" fill="#fff" stroke="#000" stroke-width="1.3"/><path d="M4 5h6M4 8h6M4 11h6M4 13h4" stroke="#000"/></svg>
<div class="t" style="left:627px;top:947px">剪辑历史</div>
<!-- output box -->
<div class="a" style="left:23px;top:969px;width:1897px;height:54px;border-top:1px solid #fff;border-left:1px solid #fff;border-bottom:2px solid #808080"></div>
<div class="a" style="left:28px;top:974px;width:1886px;height:42px;background:#fff;border-top:2px solid #808080;border-left:2px solid #808080;border-right:1px solid #fff;border-bottom:1px solid #fff;box-shadow:inset -1px -1px #e3e3e3"></div>
<div class="hl" style="left:0;top:1027px;width:1920px;background:#c0c0c0"></div>
<!-- DIALOG -->
<div class="a" style="left:366px;top:165px;width:804px;height:503px;background:#1e1e1e;border-radius:2px 2px 0 0"></div>
<div class="a" style="left:367px;top:166px;width:802px;height:501px;background:linear-gradient(#8fb0d6 0px,#a3c0e0 12px,#b9d2ec 32px,#c0d7ef 40px);border-radius:6px 6px 0 0"></div>
<div class="a" style="left:369px;top:198px;width:798px;height:466px;background:#f0f0f0"></div>
<svg style="left:372px;top:173px" width="22" height="21" viewBox="0 0 22 21"><rect width="22" height="21" fill="#f5f0b8"/><ellipse cx="11" cy="12" rx="10" ry="8" fill="#c8782a"/><ellipse cx="11" cy="6" rx="6" ry="4.5" fill="#8a6cc8"/><ellipse cx="11" cy="13" rx="6" ry="4" fill="#e8c890"/><path d="M4 13h3M15 13h3" stroke="#333" stroke-width="1.5"/><path d="M2 19L6 15M20 19L16 15" stroke="#ffa020" stroke-width="2"/><rect x="5" y="16" width="12" height="3" fill="#6a4a2a"/></svg>
<div class="t" style="left:397px;top:174px;font-size:15px;letter-spacing:0">超级宠物</div>
<div class="hl" style="left:456px;top:183px;width:66px;background:#1a1a1a"></div>
<div class="t" style="left:522px;top:174px;font-size:15px;letter-spacing:-0.1px">小型游戏-【CYGF_小辉】</div>
<div class="a" style="left:1040px;top:172px;width:38px;height:22px;border:1px solid #6d85a8;border-radius:3px;background:linear-gradient(#c8daf0 0%,#bcd0ea 45%,#9fbadc 50%,#b7cfea 100%)"></div>
<div class="a" style="left:1052px;top:183px;width:13px;height:5px;background:#e8e8e8;border:1px solid #4a5a78;border-radius:1px"></div>
<div class="a" style="left:1082px;top:172px;width:38px;height:22px;border:1px solid #8aa2c2;border-radius:3px;background:linear-gradient(#c8daf0 0%,#bcd0ea 45%,#9fbadc 50%,#b7cfea 100%)"></div>
<div class="a" style="left:1094px;top:177px;width:13px;height:11px;background:#e8e8e8;border:1px solid #4a5a78;border-radius:1px"></div>
<div class="a" style="left:1097px;top:180px;width:7px;height:4px;background:#9fb6d4;border:1px solid #4a5a78"></div>
<div class="a" style="left:1124px;top:172px;width:40px;height:22px;border:1px solid #5a1a1a;border-radius:3px;background:linear-gradient(#e8a090 0%,#d88070 45%,#c04020 52%,#d87050 100%)"></div>
<svg style="left:1136px;top:176px" width="16" height="13" viewBox="0 0 16 13"><path d="M2.5 1.5L13.5 11.5M13.5 1.5L2.5 11.5" stroke="#555" stroke-width="4" stroke-linecap="round"/><path d="M2.5 1.5L13.5 11.5M13.5 1.5L2.5 11.5" stroke="#f4f4f4" stroke-width="2.6" stroke-linecap="round"/></svg>
<div class="hl" style="left:369px;top:223px;width:798px;background:#fff"></div>
<div class="a" style="left:371px;top:198px;width:79px;height:26px;background:#f0f0f0;border-top:1px solid #fff;border-left:1px solid #fff;border-right:2px solid #808080"></div>
<div class="t " style="left:380px;top:200px;">全局数据</div>
<div class="t " style="left:455px;top:203px;">宠物数据</div>
<div class="a" style="left:521px;top:201px;width:2px;height:21px;border-left:1px solid #a0a0a0;border-right:1px solid #fff"></div>
<div class="t " style="left:530px;top:203px;">副本数据</div>
<div class="a" style="left:596px;top:201px;width:2px;height:21px;border-left:1px solid #a0a0a0;border-right:1px solid #fff"></div>
<div class="t " style="left:605px;top:203px;">市场数据</div>
<div class="a" style="left:671px;top:201px;width:2px;height:21px;border-left:1px solid #a0a0a0;border-right:1px solid #fff"></div>
<div class="t " style="left:680px;top:203px;">道具数据</div>
<div class="a" style="left:746px;top:201px;width:2px;height:21px;border-left:1px solid #a0a0a0;border-right:1px solid #fff"></div>
<div class="t " style="left:755px;top:203px;">神器数据</div>
<div class="a" style="left:822px;top:201px;width:2px;height:21px;border-left:1px solid #a0a0a0;border-right:1px solid #fff"></div>
<div class="t " style="left:830px;top:203px;">词库数据</div>
<div class="a" style="left:897px;top:201px;width:2px;height:21px;border-left:1px solid #a0a0a0;border-right:1px solid #fff"></div>
<div class="t " style="left:905px;top:203px;">自定义事件</div>
<div class="a" style="left:986px;top:201px;width:2px;height:21px;border-left:1px solid #a0a0a0;border-right:1px solid #fff"></div>
<div class="t " style="left:995px;top:203px;">玩家数据</div>
<div class="a" style="left:1061px;top:201px;width:2px;height:21px;border-left:1px solid #a0a0a0;border-right:1px solid #fff"></div>
<div class="t " style="left:1070px;top:203px;">更新内容</div>
<div class="a" style="left:1136px;top:201px;width:2px;height:21px;border-left:1px solid #a0a0a0;border-right:1px solid #fff"></div>
<div class="a" style="left:374px;top:229px;width:285px;height:120px;background:#fff"></div>
<div class="a" style="left:374px;top:237px;width:284px;height:111px;border:1px solid #a0a0a0;border-right-color:#a0a0a0"></div>
<div class="a" style="left:476px;top:235px;width:80px;height:5px;background:#fff"></div>
<div class="t" style="left:479px;top:228px">群授权列表</div>
<div class="t " style="left:382px;top:248px;">授权服务器</div>
<div class="t " style="left:458px;top:248px;"><span class="c">:</span></div>
<div class="t " style="left:472px;top:248px;">多个使用</div>
<div class="t " style="left:538px;top:248px;letter-spacing:0">“</div>
<div class="t " style="left:550px;top:248px;letter-spacing:0">|</div>
<div class="t " style="left:559px;top:248px;letter-spacing:0">”</div>
<div class="t " style="left:570px;top:248px;">进行划分</div>
<div class="edit" style="left:379px;top:268px;width:271px;height:69px"></div>
<div class="a" style="left:629px;top:270px;width:20px;height:66px;background:#f0f0f0"></div>
<svg style="left:633px;top:277px" width="12" height="52" viewBox="0 0 12 52"><path d="M2 7L6 3L10 7M2 45L6 49L10 45" fill="none" stroke="#c0c0c0" stroke-width="1.5"/></svg>
<div class="a" style="left:374px;top:350px;width:285px;height:167px;background:#fff"></div>
<div class="a" style="left:374px;top:355px;width:284px;height:161px;border:1px solid #a0a0a0;border-right-color:#a0a0a0"></div>
<div class="a" style="left:468px;top:353px;width:96px;height:5px;background:#fff"></div>
<div class="t" style="left:471px;top:346px">全局变量计算</div>
<div class="t " style="left:380px;top:368px;">宠物战力计算公式<span class="c">:</span></div>
<div class="edit" style="left:379px;top:388px;width:271px;height:48px"></div>
<div class="edit" style="left:379px;top:441px;width:270px;height:68px"></div>
<div class="a" style="left:627px;top:443px;width:21px;height:65px;background:#f0f0f0"></div>
<svg style="left:631px;top:450px" width="12" height="52" viewBox="0 0 12 52"><path d="M2 7L6 3L10 7M2 45L6 49L10 45" fill="none" stroke="#c0c0c0" stroke-width="1.5"/></svg>
<div class="t red" style="left:382px;top:441px;font-size:15px">战力变量<span class="c">:</span></div>
<div class="t red" style="left:383px;top:455px;font-size:15px"><span class="c">[</span>宠物攻击<span class="c">]</span></div>
<div class="t red" style="left:466px;top:455px;font-size:15px"><span class="c">[</span>宠物防御<span class="c">]</span></div>
<div class="t red" style="left:549px;top:455px;font-size:15px"><span class="c">[</span>宠物智力<span class="c">]</span></div>
<div class="a" style="left:664px;top:229px;width:502px;height:188px;background:#fff"></div>
<div class="a" style="left:664px;top:237px;width:501px;height:179px;border:1px solid #a0a0a0;border-right-color:#a0a0a0"></div>
<div class="a" style="left:867px;top:235px;width:96px;height:5px;background:#fff"></div>
<div class="t" style="left:870px;top:228px">全局基础数据</div>
<div class="t " style="right:1153px;top:256px;">砸蛋消耗积分<span class="c">:</span></div>
<div class="edit" style="left:767px;top:250px;width:97px;height:27px"></div>
<div class="t " style="right:1153px;top:284px;">砸蛋每日次数<span class="c">:</span></div>
<div class="edit" style="left:767px;top:280px;width:97px;height:27px"></div>
<div class="t " style="right:1153px;top:314px;">活动间隔时间<span class="c">:</span></div>
<div class="edit" style="left:767px;top:310px;width:97px;height:27px"></div>
<div class="t blue" style="right:1153px;top:345px;">洗髓随机范围<span class="c">:</span></div>
<div class="edit" style="left:767px;top:340px;width:97px;height:27px"></div>
<div class="t " style="right:1153px;top:375px;">蓝色消耗精力<span class="c">:</span></div>
<div class="edit" style="left:767px;top:370px;width:97px;height:27px"></div>
<div class="t blue" style="right:935px;top:256px;">修炼获得经验<span class="c">:</span></div>
<div class="edit" style="left:985px;top:250px;width:97px;height:27px"></div>
<div class="t blue" style="right:935px;top:284px;">打工获得积分<span class="c">:</span></div>
<div class="edit" style="left:985px;top:280px;width:97px;height:27px"></div>
<div class="t blue" style="right:935px;top:314px;">闭关恢复生命<span class="c">:</span></div>
<div class="edit" style="left:985px;top:310px;width:97px;height:27px"></div>
<div class="t blue" style="right:935px;top:345px;">学习获得智力<span class="c">:</span></div>
<div class="edit" style="left:985px;top:340px;width:97px;height:27px"></div>
<div class="t blue" style="right:935px;top:375px;">玩耍恢复心情<span class="c">:</span></div>
<div class="edit" style="left:985px;top:370px;width:97px;height:27px"></div>
<div class="t " style="left:866px;top:314px;">秒</div>
<div class="t red" style="left:886px;top:396px;letter-spacing:-0.3px">蓝色字体格式为<span class="c">:</span> 最小-最大</div>
<div class="a" style="left:1085px;top:241px;width:30px;height:9px;background:#c0c0c0;border:1px solid #808080"></div>
<svg style="left:1094px;top:242px" width="12" height="7" viewBox="0 0 12 7"><path d="M1 3.5L4 1V6ZM11 3.5L8 1V6Z" fill="#303030"/><path d="M5 1V6M7 1V6M4 3h4" stroke="#000080" stroke-width="1"/></svg>
<div class="a" style="left:1085px;top:252px;width:30px;height:9px;background:#c0c0c0;border:1px solid #808080"></div>
<svg style="left:1094px;top:253px" width="12" height="7" viewBox="0 0 12 7"><path d="M1 3.5L4 1V6ZM11 3.5L8 1V6Z" fill="#303030"/><path d="M5 1V6M7 1V6M4 3h4" stroke="#000080" stroke-width="1"/></svg>
<div class="a" style="left:1085px;top:263px;width:30px;height:9px;background:#c0c0c0;border:1px solid #808080"></div>
<svg style="left:1094px;top:264px" width="12" height="7" viewBox="0 0 12 7"><path d="M1 3.5L4 1V6ZM11 3.5L8 1V6Z" fill="#303030"/><path d="M5 1V6M7 1V6M4 3h4" stroke="#000080" stroke-width="1"/></svg>
<div class="a" style="left:1085px;top:275px;width:30px;height:9px;background:#c0c0c0;border:1px solid #808080"></div>
<svg style="left:1094px;top:276px" width="12" height="7" viewBox="0 0 12 7"><path d="M1 3.5L4 1V6ZM11 3.5L8 1V6Z" fill="#303030"/><path d="M5 1V6M7 1V6M4 3h4" stroke="#000080" stroke-width="1"/></svg>
<div class="a" style="left:1085px;top:286px;width:30px;height:9px;background:#c0c0c0;border:1px solid #808080"></div>
<svg style="left:1094px;top:287px" width="12" height="7" viewBox="0 0 12 7"><path d="M1 3.5L4 1V6ZM11 3.5L8 1V6Z" fill="#303030"/><path d="M5 1V6M7 1V6M4 3h4" stroke="#000080" stroke-width="1"/></svg>
<div class="a" style="left:1085px;top:297px;width:30px;height:9px;background:#c0c0c0;border:1px solid #808080"></div>
<svg style="left:1094px;top:298px" width="12" height="7" viewBox="0 0 12 7"><path d="M1 3.5L4 1V6ZM11 3.5L8 1V6Z" fill="#303030"/><path d="M5 1V6M7 1V6M4 3h4" stroke="#000080" stroke-width="1"/></svg>
<div class="a" style="left:1085px;top:308px;width:30px;height:9px;background:#c0c0c0;border:1px solid #808080"></div>
<svg style="left:1094px;top:309px" width="12" height="7" viewBox="0 0 12 7"><path d="M1 3.5L4 1V6ZM11 3.5L8 1V6Z" fill="#303030"/><path d="M5 1V6M7 1V6M4 3h4" stroke="#000080" stroke-width="1"/></svg>
<div class="a" style="left:665px;top:420px;width:100px;height:28px;background:#f0f0f0;border-top:1px solid #fff;border-left:1px solid #fff;border-right:2px solid #808080;border-bottom:2px solid #808080"></div>
<div class="t" style="left:665px;width:100px;text-align:center;top:425px">保存全局数据</div>
<div class="t " style="right:1147px;top:460px;">最高权限执行人<span class="c">:</span></div>
<div class="edit" style="left:774px;top:454px;width:118px;height:28px"></div>
<div class="t " style="right:1147px;top:490px;">自定义氪金货币<span class="c">:</span></div>
<div class="edit" style="left:774px;top:486px;width:118px;height:28px"></div>
<div class="a" style="left:374px;top:519px;width:533px;height:145px;background:#fff"></div>
<div class="a" style="left:374px;top:527px;width:532px;height:140px;border:1px solid #a0a0a0;border-right-color:#a0a0a0"></div>
<div class="a" style="left:591px;top:525px;width:96px;height:5px;background:#fff"></div>
<div class="t" style="left:594px;top:518px">宠物相关数据</div>
<div class="t " style="right:1470px;top:545px;">复活消耗<span class="c">:</span></div>
<div class="edit" style="left:450px;top:541px;width:128px;height:28px"></div>
<div class="t " style="right:1470px;top:577px;">每分恢复<span class="c">:</span></div>
<div class="edit" style="left:450px;top:571px;width:128px;height:28px"></div>
<div class="t " style="right:1470px;top:606px;">侦查耗费<span class="c">:</span></div>
<div class="edit" style="left:450px;top:601px;width:128px;height:28px"></div>
<div class="t " style="right:1470px;top:635px;">改名消耗<span class="c">:</span></div>
<div class="edit" style="left:450px;top:631px;width:128px;height:28px"></div>
<div class="t " style="left:581px;top:576px;">精力</div>
<div class="t " style="left:580px;top:605px;">精力</div>
<div class="t " style="right:1230px;top:545px;">变性消耗<span class="c">:</span></div>
<div class="edit" style="left:690px;top:541px;width:128px;height:28px"></div>
<div class="t blue" style="right:1200px;top:578px;">战斗奖励经验<span class="c">:</span></div>
<div class="edit" style="left:720px;top:573px;width:128px;height:28px"></div>
<div class="t blue" style="right:1200px;top:609px;">战斗扣除经验<span class="c">:</span></div>
<div class="edit" style="left:720px;top:604px;width:128px;height:28px"></div>
<div class="t " style="right:1230px;top:639px;">结婚消耗<span class="c">:</span></div>
<div class="edit" style="left:690px;top:634px;width:128px;height:28px"></div>
<div class="a" style="left:912px;top:429px;width:255px;height:232px;background:#fff"></div>
<div class="a" style="left:912px;top:437px;width:254px;height:222px;border:1px solid #a0a0a0;border-right-color:#a0a0a0"></div>
<div class="a" style="left:991px;top:435px;width:96px;height:5px;background:#fff"></div>
<div class="t" style="left:994px;top:428px">宠物经验数据</div>
<div class="edit" style="left:916px;top:452px;width:78px;height:197px"></div>
<div class="t " style="right:885px;top:457px;">等级<span class="c">:</span></div>
<div class="edit" style="left:1036px;top:454px;width:67px;height:27px"></div>
<div class="t " style="right:885px;top:489px;">经验<span class="c">:</span></div>
<div class="edit" style="left:1036px;top:484px;width:67px;height:28px"></div>
<div class="t org" style="right:885px;top:519px;">生命<span class="c">:</span></div>
<div class="edit" style="left:1036px;top:516px;width:67px;height:28px"></div>
<div class="t org" style="right:885px;top:551px;">攻击<span class="c">:</span></div>
<div class="edit" style="left:1036px;top:546px;width:67px;height:28px"></div>
<div class="t org" style="right:885px;top:583px;">防御<span class="c">:</span></div>
<div class="edit" style="left:1036px;top:577px;width:67px;height:28px"></div>
<div class="t red" style="left:1109px;top:457px;font-size:15px;line-height:15px;letter-spacing:-0.3px">橙色字<br>体为升<br>级提示<br>数值!<br>升级后<br>将扣除<br>对应经<br>验值!</div>
<div class="a" style="left:997px;top:614px;width:80px;height:40px;background:#f0f0f0;border-top:1px solid #fff;border-left:1px solid #fff;border-right:2px solid #808080;border-bottom:2px solid #808080"></div>
<div class="t" style="left:997px;width:80px;text-align:center;top:625px">添加</div>
<div class="a" style="left:1082px;top:614px;width:80px;height:40px;background:#f0f0f0;border-top:1px solid #fff;border-left:1px solid #fff;border-right:2px solid #808080;border-bottom:2px solid #808080"></div>
<div class="t" style="left:1082px;width:80px;text-align:center;top:625px">加载</div>
<div class="a" style="left:367px;top:665px;width:802px;height:2px;background:#26b5da"></div>
<div class="a" style="left:1167px;top:198px;width:2px;height:467px;background:#39b8e0"></div>
<div class="a" style="left:367px;top:198px;width:2px;height:467px;background:linear-gradient(90deg,#e8f4ff 50%,#c4d8ee 50%)"></div>
<!-- CAT -->
<svg style="left:1760px;top:925px" width="160" height="105" viewBox="0 0 160 105">
<path d="M57 35Q56 22 60 10Q64 8 70 13Q80 8 92 10Q108 14 114 24Q122 26 128 30Q124 38 122 40Q124 50 118 58Q114 62 112 66Q118 74 122 82Q120 88 110 92Q104 92 100 86Q92 76 88 66Q70 62 56 54Q50 44 57 35Z" fill="#c4bab4" stroke="#7a5a48" stroke-width="1.5"/>
<path d="M60 14L67 13L61 22Z" fill="#f2a09a"/>
<path d="M116 28L125 31L120 38Z" fill="#f2a09a"/>
<circle cx="67" cy="41.5" r="2.2" fill="#3a2218"/>
<circle cx="89" cy="46.5" r="2.2" fill="#3a2218"/>
<ellipse cx="61" cy="42" rx="2.5" ry="1.8" fill="#f4a090"/>
<ellipse cx="94" cy="50.5" rx="2.5" ry="1.8" fill="#f4a090"/>
<path d="M74 45q2 2 4 0q2 2 4 0" fill="none" stroke="#3a2218" stroke-width="1"/>
<path d="M112 84l6 -2" stroke="#f2a09a" stroke-width="2"/>
<path d="M20 74Q14 66 18 61Q23 58 24 64Q22 68 26 70L32 68Q31 60 33 56L42 58Q52 52 66 53Q86 54 94 66Q98 76 96 86Q92 97 64 98Q44 98 36 94Q26 94 16 92Q12 88 15 82Q18 78 20 74Z" fill="#ffffff" stroke="#7a5a48" stroke-width="1.5"/>
<path d="M35 59L41 60L38 67Z" fill="#f2a09a"/>
<path d="M90 61L93 60L92 66Z" fill="#f2a09a"/>
<path d="M92 70q4 2 6 6" fill="none" stroke="#7a5a48" stroke-width="1.3"/>
<path d="M53 84q2 2 4 0M65 85q2 2 4 0q2 2 4 0M79 83q2 2 4 0" fill="none" stroke="#5a3a28" stroke-width="1"/>
<ellipse cx="49" cy="84.5" rx="2.6" ry="1.8" fill="#f8c8c0"/>
<ellipse cx="88" cy="83.5" rx="2.6" ry="1.8" fill="#f8c8c0"/>
<path d="M34 31L28.5 26.5Q26 23.5 28.5 21.5Q31.5 20 34 23Q36.5 20 39.5 21.5Q42 23.5 39.5 26.5Z" fill="#ff3030"/>
</svg>
<div class="a" style="left:1898px;top:961px;width:23px;height:23px;border-radius:50%;background:#cdc3bf;border:1.5px solid #8a7464"></div>
<div class="t" style="left:1902px;top:963px;font-size:15px;color:#6a5448">中</div>
<div class="a" style="left:1898px;top:992px;width:23px;height:23px;border-radius:50%;background:#cdc3bf;border:1.5px solid #8a7464"></div>
<div class="a" style="left:1905px;top:997px;width:8px;height:8px;border-radius:50%;background:#ff4020"></div>
<div class="a" style="left:1905px;top:1006px;width:7px;height:5px;background:#3a2218"></div>

</body></html>
